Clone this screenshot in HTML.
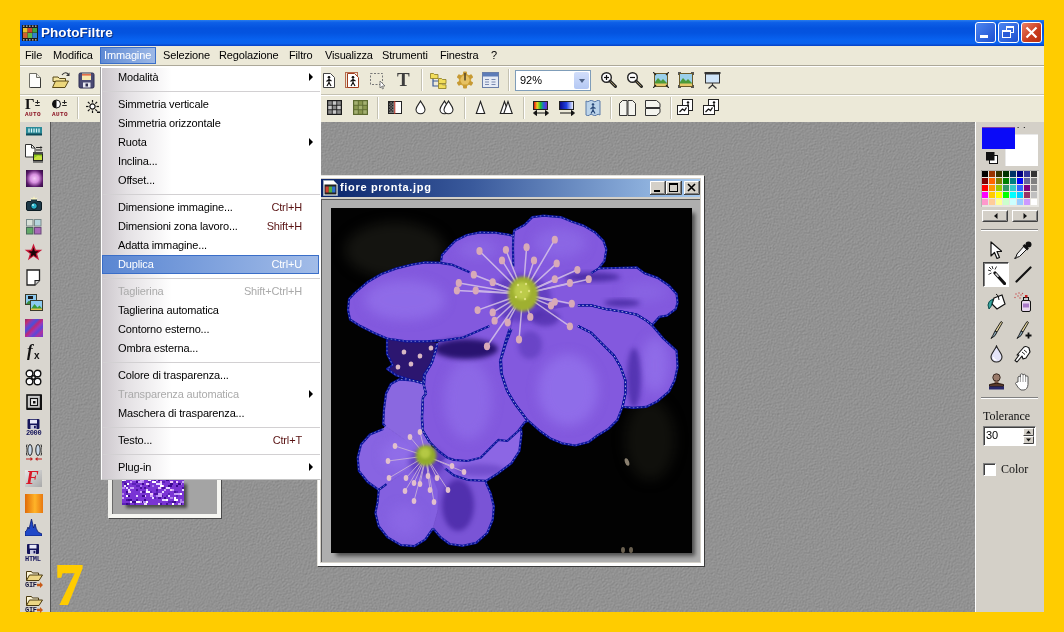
<!DOCTYPE html><html><head><meta charset="utf-8"><title>PhotoFiltre</title><style>
html,body{margin:0;padding:0}
body{width:1064px;height:632px;background:#ffcc00;position:relative;overflow:hidden;font-family:"Liberation Sans",sans-serif;font-size:11px;color:#000}
.a{position:absolute}
#title{left:20px;top:20px;width:1024px;height:26px;background:linear-gradient(#2a7cec 0%,#0d5fe6 10%,#0452de 32%,#0454e0 50%,#0862f0 76%,#0a62ee 90%,#0640c4 100%)}
#title .t{left:21px;top:5px;font-weight:bold;font-size:13.5px;color:#fff;text-shadow:1px 1px 0 #0a2a7a;letter-spacing:0.05px}
.tb{top:22px;width:21px;height:21px;border-radius:3px;box-sizing:border-box;border:1px solid #fff;background:linear-gradient(135deg,#4d86f0,#1c4fd0)}
#menubar{left:20px;top:46px;width:1024px;height:19px;background:#ece9d8}
#menubar span{position:absolute;top:3px;letter-spacing:-0.15px;white-space:nowrap}
#tool1{left:20px;top:65px;width:1024px;height:29px;background:#ece9d8;border-top:1px solid #aca899;box-sizing:border-box;box-shadow:inset 0 1px 0 #fff}
#tool2{left:20px;top:94px;width:1024px;height:28px;background:#ece9d8;border-top:1px solid #c5c2b2;box-sizing:border-box;box-shadow:inset 0 1px 0 #fff}
#side{left:20px;top:122px;width:30px;height:490px;background:#d9d6cf}
#work{left:51px;top:122px;width:924px;height:490px;background:#909090}
#rpanel{left:975px;top:122px;width:69px;height:490px;background:#d4d0c8;box-sizing:border-box;border-left:1px solid #fff}
.mi{position:absolute;left:16px;white-space:nowrap;letter-spacing:-0.15px}
.sc{position:absolute;right:18px;white-space:nowrap;color:#5a1414;letter-spacing:-0.15px}
.sep{position:absolute;left:1px;right:0;height:1px;background:#d2d0d2}
.arr{position:absolute;left:207px;width:0;height:0;border-left:4px solid #000;border-top:4px solid transparent;border-bottom:4px solid transparent}
</style></head><body><div id="root" style="position:absolute;left:0;top:0;width:1064px;height:632px;will-change:transform">
<div id="title" class="a"><span class="a t">PhotoFiltre</span></div>
<div class="a tb" style="left:975px"><div class="a" style="left:4px;top:12px;width:8px;height:3px;background:#fff"></div></div>
<div class="a tb" style="left:998px"><div class="a" style="left:7px;top:3px;width:8px;height:7px;box-sizing:border-box;border:1px solid #fff;border-top-width:2px"></div><div class="a" style="left:3px;top:7px;width:9px;height:8px;box-sizing:border-box;border:1px solid #fff;border-top-width:2px;background:#2a5cd8"></div></div>
<div class="a tb" style="left:1021px;background:linear-gradient(135deg,#ea8066,#c83a1c 60%,#b83010)"><svg class="a" style="left:0;top:0" width="19" height="19" viewBox="0 0 19 19"><path d="M4.500 4.500l10 10M14.500 4.500l-10 10" stroke="#fff" stroke-width="2.200"/></svg></div>
<svg class="a" style="left:22px;top:25px" width="16" height="16" viewBox="0 0 16 16"><rect width="16" height="16" fill="#1a1a1a"/><path d="M1 1.200h14M1 14.800h14" stroke="#c8c8c8" stroke-width="1.200" stroke-dasharray="1.500 1.500"/><rect x="1" y="3" width="4.600" height="4.600" fill="#e8c030"/><rect x="5.700" y="3" width="4.600" height="4.600" fill="#d04030"/><rect x="10.400" y="3" width="4.600" height="4.600" fill="#40a040"/><rect x="1" y="8" width="4.600" height="5" fill="#d06030"/><rect x="5.700" y="8" width="4.600" height="5" fill="#58b848"/><rect x="10.400" y="8" width="4.600" height="5" fill="#3080d0"/></svg>
<div id="menubar" class="a">
<span style="left:5px">File</span>
<span style="left:33px">Modifica</span>
<div class="a" style="left:80px;top:1px;width:56px;height:17px;box-sizing:border-box;border:1px solid #3a6ec8;background:linear-gradient(90deg,#5f8ad4,#9cb8e6)"></div><span style="left:84px;color:#fff">Immagine</span>
<span style="left:143px">Selezione</span>
<span style="left:199px">Regolazione</span>
<span style="left:269px">Filtro</span>
<span style="left:305px">Visualizza</span>
<span style="left:362px">Strumenti</span>
<span style="left:420px">Finestra</span>
<span style="left:471px">?</span>
</div>
<div id="tool1" class="a"></div><div id="tool2" class="a"></div>
<svg class="a" style="left:28px;top:72px" width="14" height="17" viewBox="0 0 14 17"><path d="M1.5 1.5h7l4 4v10h-11z" fill="#fdfdfb" stroke="#6e6e66" stroke-width="1"/><path d="M8.5 1.5v4h4" fill="#e8e8e0" stroke="#6e6e66" stroke-width="1"/><path d="M2.5 15.5h10v-9" fill="none" stroke="#3a3a36" stroke-width="1"/></svg><svg class="a" style="left:51px;top:71px" width="20" height="18" viewBox="0 0 20 18"><path d="M2 6h5l1.5 1.5h6v3h-12.5z" fill="#f5e7a0" stroke="#5a4a18" stroke-width="1"/><path d="M1.5 16.5l3-6.5h13l-3.5 6.5z" fill="#ecd77c" stroke="#5a4a18" stroke-width="1"/><path d="M11 4c2-3 5-3 6.5-0.5" fill="none" stroke="#333" stroke-width="1.1"/><path d="M18.5 1.5v3.5h-3.5z" fill="#333"/></svg><svg class="a" style="left:78px;top:72px" width="17" height="17" viewBox="0 0 17 17"><rect x="1" y="1" width="15" height="15" rx="1.5" fill="#4a4a74" stroke="#2c2c50"/><rect x="4" y="1.5" width="9" height="6.5" fill="#f6e9b0"/><rect x="4" y="2.2" width="9" height="1.3" fill="#e05030"/><rect x="5" y="10.5" width="7.5" height="5" fill="#e8e8f0"/><rect x="7.5" y="11.5" width="2.5" height="3" fill="#2c2c50"/></svg><svg class="a" style="left:321px;top:72px" width="15" height="17" viewBox="0 0 15 17"><path d="M2.5 1.5h7l4 4v10h-11z" fill="#fff" stroke="#444" stroke-width="1"/><circle cx="8" cy="5.2" r="1.3" fill="#111"/><path d="M8 6.5v4M8 7.5l-2.5 2M8 7.5l2.5 1.5M8 10.5l-2 3.5M8 10.5l2 3.5" stroke="#111" stroke-width="1.2" fill="none"/></svg><svg class="a" style="left:345px;top:72px" width="15" height="17" viewBox="0 0 15 17"><rect x="0.5" y="0.5" width="12" height="15" fill="none" stroke="#b86a4c"/><path d="M2.5 1.5h7l4 4v10h-11z" fill="#fff" stroke="#a03c1e" stroke-width="1"/><circle cx="8" cy="5.2" r="1.3" fill="#111"/><path d="M8 6.5v4M8 7.5l-2.5 2M8 7.5l2.5 1.5M8 10.5l-2 3.5M8 10.5l2 3.5" stroke="#111" stroke-width="1.2" fill="none"/></svg><svg class="a" style="left:369px;top:72px" width="18" height="18" viewBox="0 0 18 18"><rect x="1.5" y="1.5" width="12" height="11" fill="none" stroke="#777" stroke-dasharray="2 1.5"/><path d="M11 9l5 5h-2.5l1 2.5-1 .5-1-2.5-1.5 1.5z" fill="#fff" stroke="#666" stroke-width="0.8"/></svg><div class="a" style="left:397px;top:67px;font:bold 19px 'Liberation Serif',serif;color:#3c3c3c;line-height:26px">T</div><div class="a" style="left:421px;top:69px;width:1px;height:22px;background:#c5c2b2;box-shadow:1px 0 0 #fff"></div><svg class="a" style="left:430px;top:72px" width="17" height="17" viewBox="0 0 17 17"><path d="M3 5v9h6M3 9h6" stroke="#3a5a98" fill="none" stroke-width="1.2"/><path d="M0.5 1.5h3l1 1h3.5v4h-7.5z" fill="#f1dd5a" stroke="#8a7a20" stroke-width="0.8"/><path d="M8.5 6.5h3l1 1h3.5v4h-7.5z" fill="#f1dd5a" stroke="#8a7a20" stroke-width="0.8"/><path d="M8.5 11.8h3l1 1h3.5v3.7h-7.5z" fill="#f1dd5a" stroke="#8a7a20" stroke-width="0.8"/></svg><svg class="a" style="left:456px;top:71px" width="18" height="18" viewBox="0 0 18 18"><g transform="translate(9 9)"><circle r="6.2" fill="#d6a93c"/><rect x="-2" y="-8.5" width="4" height="4" rx="1" fill="#c79a34" transform="rotate(0)"/><rect x="-2" y="-8.5" width="4" height="4" rx="1" fill="#c79a34" transform="rotate(60)"/><rect x="-2" y="-8.5" width="4" height="4" rx="1" fill="#c79a34" transform="rotate(120)"/><rect x="-2" y="-8.5" width="4" height="4" rx="1" fill="#c79a34" transform="rotate(180)"/><rect x="-2" y="-8.5" width="4" height="4" rx="1" fill="#c79a34" transform="rotate(240)"/><rect x="-2" y="-8.5" width="4" height="4" rx="1" fill="#c79a34" transform="rotate(300)"/><circle r="4.5" fill="#e6c163"/><rect x="-0.8" y="-7" width="1.6" height="7.5" fill="#5a4a2a"/></g></svg><svg class="a" style="left:482px;top:72px" width="17" height="16" viewBox="0 0 17 16"><rect x="0.5" y="0.5" width="16" height="15" fill="#e6ebf5" stroke="#6a7ea8"/><rect x="1" y="1" width="15" height="3.5" fill="#5d7cb8"/><path d="M3 7.5h4M3 10h4M3 12.5h4M9.5 7.5h4M9.5 10h4M9.5 12.5h4" stroke="#7a8ab0" stroke-width="1.2"/></svg><div class="a" style="left:508px;top:69px;width:1px;height:22px;background:#c5c2b2;box-shadow:1px 0 0 #fff"></div><div class="a" style="left:515px;top:70px;width:76px;height:21px;box-sizing:border-box;border:1px solid #7f9db9;background:#fff"><span class="a" style="left:4px;top:3px;font-size:11px">92%</span><div class="a" style="right:1px;top:1px;width:15px;height:17px;background:linear-gradient(#d2defa,#b4c8f4);border-radius:2px"></div><div class="a" style="right:5px;top:8px;width:0;height:0;border-top:4px solid #4d6185;border-left:3.5px solid transparent;border-right:3.5px solid transparent"></div></div><svg class="a" style="left:600px;top:71px" width="18" height="18" viewBox="0 0 18 18"><circle cx="6.5" cy="6.5" r="4.8" fill="#fdfdfd" stroke="#222" stroke-width="1.4"/><path d="M10 10l5.5 5.5" stroke="#222" stroke-width="3" stroke-linecap="round"/><path d="M10.8 10.8l4.2 4.2" stroke="#9a8a5a" stroke-width="1" stroke-linecap="round"/><path d="M4 6.5h5" stroke="#111" stroke-width="1.2"/><path d="M6.5 4v5" stroke="#111" stroke-width="1.2"/></svg><svg class="a" style="left:626px;top:71px" width="18" height="18" viewBox="0 0 18 18"><circle cx="6.5" cy="6.5" r="4.8" fill="#fdfdfd" stroke="#222" stroke-width="1.4"/><path d="M10 10l5.5 5.5" stroke="#222" stroke-width="3" stroke-linecap="round"/><path d="M10.8 10.8l4.2 4.2" stroke="#9a8a5a" stroke-width="1" stroke-linecap="round"/><path d="M4 6.5h5" stroke="#111" stroke-width="1.2"/></svg><svg class="a" style="left:653px;top:72px" width="16" height="16" viewBox="0 0 16 16"><rect x="1.5" y="1.5" width="13" height="13" fill="#9ad0ea" stroke="#6a5a2a"/><path d="M2 10l3-4 3 3 2-2 4 4v3h-12z" fill="#4a9a3a"/><rect x="2" y="11.5" width="12" height="2.5" fill="#e6c86a"/><path d="M0 0l3 3M16 0l-3 3M0 16l3-3M16 16l-3-3" stroke="#222" stroke-width="1.2"/></svg><svg class="a" style="left:678px;top:72px" width="16" height="16" viewBox="0 0 16 16"><rect x="1.5" y="1.5" width="13" height="13" fill="#9ad0ea" stroke="#6a5a2a"/><path d="M2 10l3-4 3 3 2-2 4 4v3h-12z" fill="#4a9a3a"/><rect x="2" y="11.5" width="12" height="2.5" fill="#e6c86a"/><path d="M0.5 3v-2.5h2.5M13 0.5h2.5v2.5M15.500 13v2.500h-2.500M3 15.500h-2.500v-2.500" stroke="#555" fill="none" stroke-width="1.2"/></svg><svg class="a" style="left:704px;top:71px" width="17" height="18" viewBox="0 0 17 18"><rect x="0.5" y="1" width="16" height="2" fill="#333"/><rect x="1.5" y="3" width="14" height="9" fill="#cfe4f8" stroke="#333"/><path d="M8.500 12v2M8.500 14l-4 3.500M8.500 14l4 3.500" stroke="#333" stroke-width="1.2" fill="none"/></svg><div class="a" style="left:25px;top:96px;font:bold 15px 'Liberation Serif',serif;line-height:16px;color:#111">Γ</div><div class="a" style="left:35px;top:98px;font:bold 9px 'Liberation Sans',sans-serif;line-height:11px;color:#222">±</div><div class="a" style="left:25px;top:111px;font:bold 6px 'Liberation Mono',monospace;line-height:7px;color:#8a1020;letter-spacing:0.4px">AUTO</div><svg class="a" style="left:52px;top:99px" width="9" height="10" viewBox="0 0 9 10"><circle cx="4.5" cy="5" r="4" fill="#fff" stroke="#111"/><path d="M4.500 1a4 4 0 0 0 0 8z" fill="#111"/></svg><div class="a" style="left:62px;top:98px;font:bold 9px 'Liberation Sans',sans-serif;line-height:11px;color:#222">±</div><div class="a" style="left:52px;top:111px;font:bold 6px 'Liberation Mono',monospace;line-height:7px;color:#8a1020;letter-spacing:0.4px">AUTO</div><div class="a" style="left:77px;top:97px;width:1px;height:22px;background:#c5c2b2;box-shadow:1px 0 0 #fff"></div><svg class="a" style="left:86px;top:100px" width="14" height="14" viewBox="0 0 14 14"><g transform="translate(6.500 6.500)"><circle r="2.600" fill="#fff" stroke="#111" stroke-width="1.2"/><path d="M0 -4v-2.500" stroke="#111" stroke-width="1.2" transform="rotate(0)"/><path d="M0 -4v-2.500" stroke="#111" stroke-width="1.2" transform="rotate(45)"/><path d="M0 -4v-2.500" stroke="#111" stroke-width="1.2" transform="rotate(90)"/><path d="M0 -4v-2.500" stroke="#111" stroke-width="1.2" transform="rotate(135)"/><path d="M0 -4v-2.500" stroke="#111" stroke-width="1.2" transform="rotate(180)"/><path d="M0 -4v-2.500" stroke="#111" stroke-width="1.2" transform="rotate(225)"/><path d="M0 -4v-2.500" stroke="#111" stroke-width="1.2" transform="rotate(270)"/><path d="M0 -4v-2.500" stroke="#111" stroke-width="1.2" transform="rotate(315)"/></g><rect x="11" y="11.500" width="3" height="1.500" fill="#111"/></svg><svg class="a" style="left:327px;top:100px" width="15" height="15" viewBox="0 0 15 15"><rect width="15" height="15" fill="#1c1c1c"/><rect x="1.2" y="1.2" width="3.6" height="3.6" fill="#8a8a8a"/><rect x="1.2" y="5.7" width="3.6" height="3.6" fill="#c8c8c8"/><rect x="1.2" y="10.2" width="3.6" height="3.6" fill="#8a8a8a"/><rect x="5.7" y="1.2" width="3.6" height="3.6" fill="#c8c8c8"/><rect x="5.7" y="5.7" width="3.6" height="3.6" fill="#8a8a8a"/><rect x="5.7" y="10.2" width="3.6" height="3.6" fill="#c8c8c8"/><rect x="10.2" y="1.2" width="3.6" height="3.6" fill="#8a8a8a"/><rect x="10.2" y="5.7" width="3.6" height="3.6" fill="#c8c8c8"/><rect x="10.2" y="10.2" width="3.6" height="3.6" fill="#8a8a8a"/></svg><svg class="a" style="left:353px;top:100px" width="15" height="15" viewBox="0 0 15 15"><rect width="15" height="15" fill="#5c6a30"/><rect x="1.2" y="1.2" width="3.6" height="3.6" fill="#a4b070"/><rect x="1.2" y="5.7" width="3.6" height="3.6" fill="#8a9850"/><rect x="1.2" y="10.2" width="3.6" height="3.6" fill="#a4b070"/><rect x="5.7" y="1.2" width="3.6" height="3.6" fill="#8a9850"/><rect x="5.7" y="5.7" width="3.6" height="3.6" fill="#a4b070"/><rect x="5.7" y="10.2" width="3.6" height="3.6" fill="#8a9850"/><rect x="10.2" y="1.2" width="3.6" height="3.6" fill="#a4b070"/><rect x="10.2" y="5.7" width="3.6" height="3.6" fill="#8a9850"/><rect x="10.2" y="10.2" width="3.6" height="3.6" fill="#a4b070"/></svg><div class="a" style="left:377px;top:97px;width:1px;height:22px;background:#c5c2b2;box-shadow:1px 0 0 #fff"></div><svg class="a" style="left:388px;top:101px" width="14" height="13" viewBox="0 0 14 13"><rect x="0.5" y="0.5" width="13" height="12" fill="#fff" stroke="#222"/><rect x="1" y="1" width="5.500" height="11" fill="#777"/><path d="M1 1h1.400v1.400h-1.400zM3.800 1h1.400v1.400h-1.400zM2.400 2.400h1.400v1.400h-1.400zM1 3.800h1.400v1.400h-1.400zM3.800 3.800h1.400v1.400h-1.400zM2.400 5.200h1.400v1.400h-1.400zM1 6.600h1.400v1.400h-1.400zM3.800 6.600h1.400v1.400h-1.400zM2.400 8h1.400v1.400h-1.400zM1 9.400h1.400v1.400h-1.400zM3.800 9.400h1.400v1.400h-1.400z" fill="#222"/><path d="M6.800 0v13" stroke="#c03020" stroke-width="1"/></svg><svg class="a" style="left:415px;top:100px" width="12" height="15" viewBox="0 0 12 15"><path d="M5.5 1c-1.500 3-4.500 5.500-4.500 8.500a4.500 4.300 0 0 0 9 0c0-3-3-5.500-4.500-8.500z" fill="#fff" stroke="#222" stroke-width="1.1"/></svg><svg class="a" style="left:439px;top:100px" width="15" height="15" viewBox="0 0 15 15"><path d="M5.5 1c-1.500 3-4.500 5.500-4.500 8.500a4.500 4.300 0 0 0 9 0c0-3-3-5.500-4.500-8.500z" fill="#fff" stroke="#222" stroke-width="1.1"/><path d="M9.5 1c-1.500 3-4.500 5.500-4.500 8.500a4.500 4.300 0 0 0 9 0c0-3-3-5.500-4.500-8.500z" fill="#fff" stroke="#222" stroke-width="1.1"/></svg><div class="a" style="left:464px;top:97px;width:1px;height:22px;background:#c5c2b2;box-shadow:1px 0 0 #fff"></div><svg class="a" style="left:475px;top:100px" width="12" height="15" viewBox="0 0 12 15"><path d="M5.5 1.500l-4.200 12h8.400z" fill="#fff" stroke="#222" stroke-width="1.100"/></svg><svg class="a" style="left:499px;top:100px" width="15" height="15" viewBox="0 0 15 15"><path d="M5.5 1.500l-4.200 12h8.400z" fill="#fff" stroke="#222" stroke-width="1.100"/><path d="M9 1.500l-4.200 12h8.400z" fill="#fff" stroke="#222" stroke-width="1.100"/></svg><div class="a" style="left:523px;top:97px;width:1px;height:22px;background:#c5c2b2;box-shadow:1px 0 0 #fff"></div><div class="a" style="left:533px;top:101px;width:15px;height:9px;background:linear-gradient(90deg,#e01010,#f0d020,#20c030,#2060e0,#8020c0);border:1px solid #222;box-sizing:border-box"></div><svg class="a" style="left:533px;top:110px" width="16" height="6" viewBox="0 0 16 6"><path d="M2 3h12M0.500 3l3-2.500v5zM15.500 3l-3-2.500v5z" stroke="#111" fill="#111" stroke-width="1"/></svg><div class="a" style="left:559px;top:101px;width:15px;height:9px;background:linear-gradient(90deg,#0a0a8a,#2040e0,#e8eeff);border:1px solid #222;box-sizing:border-box"></div><svg class="a" style="left:559px;top:110px" width="16" height="6" viewBox="0 0 16 6"><path d="M1 3h12M15.500 3l-3-2.500v5z" stroke="#111" fill="#111" stroke-width="1"/></svg><svg class="a" style="left:585px;top:100px" width="16" height="16" viewBox="0 0 16 16"><path d="M1 1q2 1.500 3.500 0t3.500 0 3.500 0 3.500 0v14q-2-1.500-3.500 0t-3.500 0-3.500 0-3.500 0z" fill="#bcd4ea" stroke="#5a7aa8"/><circle cx="8" cy="4.500" r="1.300" fill="#2a4a7a"/><path d="M8 6v4M8 7l-2.500 2M8 7l2.500 1.500M8 10l-2 3.500M8 10l2 3.500" stroke="#2a4a7a" stroke-width="1.200" fill="none"/></svg><div class="a" style="left:610px;top:97px;width:1px;height:22px;background:#c5c2b2;box-shadow:1px 0 0 #fff"></div><svg class="a" style="left:619px;top:100px" width="17" height="16" viewBox="0 0 17 16"><path d="M0.500 15.500v-12l3-3h4.500v15zM9 15.500v-15h4.500l3 3v12z" fill="#f4f4ee" stroke="#333"/></svg><svg class="a" style="left:645px;top:100px" width="16" height="16" viewBox="0 0 16 16"><path d="M0.500 0.500h11l3.500 3v4h-14.500zM0.500 8.500h14.500v4l-3.500 3h-11z" fill="#f4f4ee" stroke="#333"/></svg><div class="a" style="left:670px;top:97px;width:1px;height:22px;background:#c5c2b2;box-shadow:1px 0 0 #fff"></div><svg class="a" style="left:677px;top:99px" width="17" height="17" viewBox="0 0 17 17"><rect x="5.500" y="0.500" width="10" height="11" fill="#fff" stroke="#222"/><rect x="0.500" y="6.500" width="11" height="9" fill="#fff" stroke="#222"/><path d="M2.500 13l3-3 2 1.500 2-3" stroke="#111" stroke-width="1.300" fill="none"/><circle cx="11" cy="3.500" r="1.200" fill="#111"/><path d="M11 5v3" stroke="#111" stroke-width="1.200"/></svg><svg class="a" style="left:703px;top:99px" width="17" height="17" viewBox="0 0 17 17"><rect x="5.500" y="0.500" width="10" height="11" fill="#fff" stroke="#222"/><rect x="0.500" y="6.500" width="11" height="9" fill="#fff" stroke="#222"/><path d="M2.500 13l3-3 2 1.500 2-3" stroke="#111" stroke-width="1.300" fill="none"/><circle cx="11" cy="3.500" r="1.200" fill="#111"/><path d="M11 5v3" stroke="#111" stroke-width="1.200"/></svg>
<div id="side" class="a"></div><div class="a" style="left:50px;top:122px;width:1px;height:490px;background:#555"></div><div id="work" class="a"><svg width="924" height="490" style="display:block"><filter id="tx" color-interpolation-filters="sRGB" x="0" y="0" width="100%" height="100%"><feTurbulence type="fractalNoise" baseFrequency="0.8" numOctaves="2" seed="3" result="n"/><feDiffuseLighting in="n" surfaceScale="0.4" diffuseConstant="1" lighting-color="#fff"><feDistantLight azimuth="225" elevation="50"/></feDiffuseLighting><feColorMatrix type="matrix" values="0.6 0 0 0 0.112 0 0.6 0 0 0.112 0 0 0.6 0 0.112 0 0 0 1 0"/></filter><rect width="924" height="490" filter="url(#tx)"/></svg></div><div id="rpanel" class="a"></div>
<svg class="a" style="left:26px;top:127px" width="16" height="9" viewBox="0 0 16 9"><rect x="0" y="0" width="16" height="8" fill="#2a8a98"/><rect x="0" y="6.500" width="16" height="2" fill="#0e4a58"/><path d="M3 1.500v4M5.500 1.500v4M8 1.500v4M10.500 1.500v4M13 1.500v4" stroke="#d8f4f8" stroke-width="1.300"/></svg><svg class="a" style="left:25px;top:144px" width="18" height="19" viewBox="0 0 18 19"><path d="M0.500 0.500h6l3.500 3.500v9h-9.500z" fill="#fff" stroke="#333"/><path d="M6.500 0.500v3.500h3.500" fill="none" stroke="#333"/><rect x="8" y="8" width="10" height="10.500" fill="#222"/><rect x="9" y="10.500" width="8" height="5.500" fill="#8cc820"/><path d="M9 14l4-2.500 4 1v3.500h-8z" fill="#c8e040"/><path d="M11 3.500h6M11 6h6" stroke="#222" stroke-width="1.200"/><path d="M17.500 3.500l-2-1.500v3z" fill="#222"/><path d="M8.500 9h9M8.500 17.500h9" stroke="#ddd" stroke-width="0.800" stroke-dasharray="1 1"/></svg><div class="a" style="left:26px;top:170px;width:17px;height:17px;background:radial-gradient(circle,#f4c8f8 0,#d890e0 35%,#5a1a6a 70%,#2a0a3a 100%)"></div><svg class="a" style="left:26px;top:196px" width="16" height="15" viewBox="0 0 16 15"><path d="M8 0l1 2.500 2.500-1-1.500 2.500h-4l-1.500-2.500 2.500 1z" fill="#fff8c0"/><rect x="0.500" y="5.500" width="15" height="9" rx="1.500" fill="#1e3a48" stroke="#0a1a22"/><rect x="5" y="3.500" width="6" height="3" fill="#1e3a48"/><circle cx="8" cy="10" r="3.300" fill="#28b0c8" stroke="#0a1a22"/><circle cx="7" cy="9" r="1" fill="#b8f0f8"/></svg><svg class="a" style="left:26px;top:219px" width="16" height="16" viewBox="0 0 16 16"><rect x="0.500" y="0.500" width="6.500" height="6.500" fill="#d8e0d8" stroke="#7a8a8a"/><rect x="8.500" y="0.500" width="6.500" height="6.500" fill="#b4d4dc" stroke="#7a8a8a"/><rect x="0.500" y="8.500" width="6.500" height="6.500" fill="#62a868" stroke="#4a6a5a"/><rect x="8.500" y="8.500" width="6.500" height="6.500" fill="#a868b8" stroke="#6a4a7a"/></svg><svg class="a" style="left:24px;top:243px" width="19" height="18" viewBox="0 0 19 18"><path d="M9.500 0.500l2.300 6.200h6.500l-5.200 4 2 6.500-5.600-4-5.600 4 2-6.500-5.200-4h6.500z" fill="#c81838"/><path d="M9.500 4.500l1.400 3.700h3.800l-3.100 2.400 1.200 3.800-3.300-2.400-3.300 2.400 1.200-3.800-3.100-2.400h3.800z" fill="#1a0508"/></svg><svg class="a" style="left:26px;top:269px" width="15" height="17" viewBox="0 0 15 17"><path d="M1 1h12.500v10.500l-4.500 4.500h-8z" fill="#fff" stroke="#222" stroke-width="1.300"/><path d="M13.500 11.500h-4.500v4.500" fill="#ccc" stroke="#222" stroke-width="1.100"/></svg><svg class="a" style="left:25px;top:294px" width="18" height="17" viewBox="0 0 18 17"><rect x="0.500" y="0.500" width="11" height="10" fill="#8ccaf0" stroke="#3a3a2a"/><rect x="3" y="2" width="5" height="3" fill="#1a1a1a"/><path d="M1 10l3-3.500 3 2.500v1.500z" fill="#3a8a3a"/><rect x="5.500" y="6.500" width="12" height="10" fill="#8ccaf0" stroke="#3a3a2a"/><path d="M6 15l3.500-5 3 3.500 2-2 2.500 3v1.500h-11z" fill="#3a9a3a"/><rect x="6" y="14.500" width="11" height="1.500" fill="#e0c050"/></svg><div class="a" style="left:25px;top:319px;width:18px;height:18px;background:linear-gradient(135deg,#8a2a6a 0%,#c03070 14%,#7a40c0 26%,#4a50d8 36%,#c02878 48%,#9a38b8 58%,#5a48d8 70%,#b030a0 82%,#6a40d0 100%)"></div><div class="a" style="left:27px;top:341px;font:italic bold 17px 'Liberation Serif',serif;line-height:20px;color:#111">f</div><div class="a" style="left:34px;top:350px;font:bold 10px 'Liberation Sans',sans-serif;line-height:11px;color:#111">x</div><svg class="a" style="left:25px;top:369px" width="17" height="17" viewBox="0 0 17 17"><g fill="#fff" stroke="#111" stroke-width="1.400"><circle cx="4.500" cy="4.500" r="3.300"/><circle cx="12.500" cy="4.500" r="3.300"/><circle cx="4.500" cy="12.500" r="3.300"/><circle cx="12.500" cy="12.500" r="3.300"/><circle cx="8.500" cy="8.500" r="1.800"/></g></svg><svg class="a" style="left:26px;top:394px" width="16" height="16" viewBox="0 0 16 16"><rect x="1" y="1" width="14" height="14" fill="#c8c8c8" stroke="#111" stroke-width="1.600"/><path d="M1 15h14v-14" fill="none" stroke="#111" stroke-width="2.400"/><rect x="4.500" y="4.500" width="7" height="7" fill="#e8e8e8" stroke="#111" stroke-width="1.100"/><rect x="7" y="7" width="2.500" height="2.500" fill="#111"/></svg><svg class="a" style="left:27px;top:419px" width="13" height="10" viewBox="0 0 12 10"><rect x="0" y="0" width="12" height="10" rx="1" fill="#14145a"/><rect x="2.500" y="0.800" width="7" height="3.700" fill="#e8e8f8"/><rect x="3" y="6" width="6" height="4" fill="#c8c8e0"/><rect x="6.500" y="6.800" width="1.800" height="2.500" fill="#14145a"/></svg><div class="a" style="left:26px;top:430px;font:bold 7px 'Liberation Mono',monospace;line-height:7px;color:#14145a;letter-spacing:-0.400px">2000</div><svg class="a" style="left:26px;top:444px" width="16" height="17" viewBox="0 0 16 17"><ellipse cx="4" cy="6" rx="2.200" ry="5.500" fill="#c8d8e8" stroke="#222"/><ellipse cx="12" cy="6" rx="2.200" ry="5.500" fill="#c8d8e8" stroke="#222"/><path d="M1 0.500c-1.500 4-1.500 7 0 11M15 0.500c1.500 4 1.500 7 0 11" stroke="#222" fill="none"/><path d="M0 15h6M16 15h-6" stroke="#c02020" stroke-width="1.200"/><path d="M7 15l-2.500-2v4zM9 15l2.500-2v4z" fill="#c02020"/></svg><div class="a" style="left:25px;top:470px;width:17px;height:17px;background:linear-gradient(135deg,#e8e8e8,#a8a8a8)"></div><div class="a" style="left:26px;top:467px;font:italic bold 19px 'Liberation Serif',serif;line-height:22px;color:#d81828">F</div><div class="a" style="left:25px;top:494px;width:18px;height:19px;background:linear-gradient(90deg,#e06a08,#ffb428 55%,#e87810)"></div><svg class="a" style="left:25px;top:519px" width="17" height="17" viewBox="0 0 17 17"><path d="M0 17v-4q2-1 3-5l1 2q1-4 2.500-10q1.500 6 2 9l1.500-4q1 5 3 8q2 1 4 2v2z" fill="#2048c8" stroke="#0a1a6a" stroke-width="0.800"/></svg><svg class="a" style="left:27px;top:544px" width="12" height="10" viewBox="0 0 12 10"><rect x="0" y="0" width="12" height="10" rx="1" fill="#14145a"/><rect x="2.500" y="0.800" width="7" height="3.700" fill="#e8e8f8"/><rect x="3" y="6" width="6" height="4" fill="#c8c8e0"/><rect x="6.500" y="6.800" width="1.800" height="2.500" fill="#14145a"/></svg><div class="a" style="left:25px;top:555px;font:bold 7px 'Liberation Mono',monospace;line-height:8px;color:#14145a;letter-spacing:-0.300px">HTML</div><svg class="a" style="left:26px;top:570px" width="17" height="11" viewBox="0 0 17 11"><path d="M0.500 10.500v-9h5l1 1.500h6v2" fill="#fdf6d8" stroke="#4a3a10"/><path d="M0.500 10.500l3-5.500h13l-3.500 5.500z" fill="#ecd684" stroke="#4a3a10"/></svg><div class="a" style="left:25px;top:581px;font:bold 7px 'Liberation Mono',monospace;line-height:8px;color:#14143a;letter-spacing:-0.300px">GIF</div><svg class="a" style="left:37px;top:582px" width="6" height="6" viewBox="0 0 6 6"><path d="M0 1.800h3v-1.800l3 3-3 3v-1.800h-3z" fill="#c85a18"/></svg><svg class="a" style="left:26px;top:595px" width="17" height="11" viewBox="0 0 17 11"><path d="M0.500 10.500v-9h5l1 1.500h6v2" fill="#fdf6d8" stroke="#4a3a10"/><path d="M0.500 10.500l3-5.500h13l-3.500 5.500z" fill="#ecd684" stroke="#4a3a10"/></svg><div class="a" style="left:25px;top:606px;font:bold 7px 'Liberation Mono',monospace;line-height:8px;color:#14143a;letter-spacing:-0.300px">GIF</div><svg class="a" style="left:37px;top:607px" width="6" height="6" viewBox="0 0 6 6"><path d="M0 1.800h3v-1.800l3 3-3 3v-1.800h-3z" fill="#c85a18"/></svg>
<div class="a" style="left:1005px;top:134px;width:33px;height:32px;background:#fff;box-shadow:inset 1px 1px 0 #e8e8e8"></div><div class="a" style="left:982px;top:127px;width:33px;height:21px;background:#0a0af8;border-top:1px solid #7a3ab0"></div><svg class="a" style="left:986px;top:152px" width="12" height="12" viewBox="0 0 12 12"><rect x="3.500" y="3.500" width="8" height="8" fill="#fff" stroke="#111"/><rect x="0" y="0" width="8.500" height="8.500" fill="#111"/></svg><div class="a" style="left:1017px;top:123px;font:bold 8px 'Liberation Sans',sans-serif;line-height:6px;color:#222;letter-spacing:4px">..</div><svg class="a" style="left:981px;top:170px" width="58" height="37" viewBox="0 0 58 37"><rect width="58" height="37" fill="#e8e6e0"/><path d="M0 37v-37h58" stroke="#808080" fill="none"/><rect x="1" y="1" width="6" height="6" fill="#000000"/><rect x="8" y="1" width="6" height="6" fill="#993300"/><rect x="15" y="1" width="6" height="6" fill="#333300"/><rect x="22" y="1" width="6" height="6" fill="#003300"/><rect x="29" y="1" width="6" height="6" fill="#003366"/><rect x="36" y="1" width="6" height="6" fill="#000080"/><rect x="43" y="1" width="6" height="6" fill="#333399"/><rect x="50" y="1" width="6" height="6" fill="#333333"/><rect x="1" y="8" width="6" height="6" fill="#800000"/><rect x="8" y="8" width="6" height="6" fill="#ff6600"/><rect x="15" y="8" width="6" height="6" fill="#808000"/><rect x="22" y="8" width="6" height="6" fill="#008000"/><rect x="29" y="8" width="6" height="6" fill="#008080"/><rect x="36" y="8" width="6" height="6" fill="#0000ff"/><rect x="43" y="8" width="6" height="6" fill="#666699"/><rect x="50" y="8" width="6" height="6" fill="#808080"/><rect x="1" y="15" width="6" height="6" fill="#ff0000"/><rect x="8" y="15" width="6" height="6" fill="#ff9900"/><rect x="15" y="15" width="6" height="6" fill="#99cc00"/><rect x="22" y="15" width="6" height="6" fill="#339966"/><rect x="29" y="15" width="6" height="6" fill="#33cccc"/><rect x="36" y="15" width="6" height="6" fill="#3366ff"/><rect x="43" y="15" width="6" height="6" fill="#800080"/><rect x="50" y="15" width="6" height="6" fill="#969696"/><rect x="1" y="22" width="6" height="6" fill="#ff00ff"/><rect x="8" y="22" width="6" height="6" fill="#ffcc00"/><rect x="15" y="22" width="6" height="6" fill="#ffff00"/><rect x="22" y="22" width="6" height="6" fill="#00ff00"/><rect x="29" y="22" width="6" height="6" fill="#00ffff"/><rect x="36" y="22" width="6" height="6" fill="#00ccff"/><rect x="43" y="22" width="6" height="6" fill="#993366"/><rect x="50" y="22" width="6" height="6" fill="#c0c0c0"/><rect x="1" y="29" width="6" height="6" fill="#ff99cc"/><rect x="8" y="29" width="6" height="6" fill="#ffcc99"/><rect x="15" y="29" width="6" height="6" fill="#ffff99"/><rect x="22" y="29" width="6" height="6" fill="#ccffcc"/><rect x="29" y="29" width="6" height="6" fill="#ccffff"/><rect x="36" y="29" width="6" height="6" fill="#99ccff"/><rect x="43" y="29" width="6" height="6" fill="#cc99ff"/><rect x="50" y="29" width="6" height="6" fill="#ffffff"/></svg><svg class="a" style="left:982px;top:210px" width="26" height="12" viewBox="0 0 26 12"><rect x="0.500" y="0.500" width="25" height="11" fill="#d4d0c8" stroke="#fff"/><path d="M0.500 11.500h25v-11" stroke="#404040" fill="none"/><path d="M1.500 10.500h23v-9" stroke="#808080" fill="none"/><path d="M15.500 3l-3.500 3 3.500 3z" fill="#111"/></svg><svg class="a" style="left:1012px;top:210px" width="26" height="12" viewBox="0 0 26 12"><rect x="0.500" y="0.500" width="25" height="11" fill="#d4d0c8" stroke="#fff"/><path d="M0.500 11.500h25v-11" stroke="#404040" fill="none"/><path d="M1.500 10.500h23v-9" stroke="#808080" fill="none"/><path d="M11.500 3l3.500 3-3.500 3z" fill="#111"/></svg><div class="a" style="left:981px;top:229px;width:57px;height:1px;background:#808080;box-shadow:0 1px 0 #fff"></div><div class="a" style="left:981px;top:397px;width:57px;height:1px;background:#808080;box-shadow:0 1px 0 #fff"></div><svg class="a" style="left:990px;top:241px" width="12" height="19" viewBox="0 0 12 19"><path d="M1 1v14l3.500-3.500 2.500 6 2.500-1-2.500-6h5z" fill="#fff" stroke="#111" stroke-width="1.200" stroke-linejoin="round"/></svg><svg class="a" style="left:1014px;top:241px" width="18" height="19" viewBox="0 0 18 19"><path d="M11 4l3 3-8.500 8.500-3 1-1 1.500-1-1 1.500-1 1-3z" fill="#f4f4f4" stroke="#111"/><path d="M9.500 4l4.500 4.500" stroke="#111" stroke-width="2.600"/><circle cx="14.500" cy="3.500" r="3" fill="#111"/></svg><div class="a" style="left:983px;top:262px;width:26px;height:25px;box-sizing:border-box;background:#fff;border:1px solid #404040;border-right-color:#fff;border-bottom-color:#fff;box-shadow:inset 1px 1px 0 #808080"></div><svg class="a" style="left:987px;top:265px" width="19" height="20" viewBox="0 0 19 20"><path d="M8 8l9.500 10.500" stroke="#111" stroke-width="3.200" stroke-linecap="round"/><path d="M8.500 8.500l3 3.300" stroke="#ddd" stroke-width="1.500"/><path d="M5 1l1 3M1 5l3 1M9.500 1.500l-1.500 3M1.500 9.500l3-1.500M2 2l2.500 2.500" stroke="#333" stroke-width="1"/></svg><svg class="a" style="left:1015px;top:266px" width="17" height="17" viewBox="0 0 17 17"><path d="M1.500 15.500l14-14" stroke="#111" stroke-width="2.200" stroke-linecap="round"/></svg><svg class="a" style="left:986px;top:293px" width="21" height="19" viewBox="0 0 21 19"><path d="M8 5l8 -3 3 9-8 5-5-5z" fill="#fff" stroke="#111" stroke-width="1.200"/><path d="M7 6q-5 2-5 6l1 4q3-3 3-6z" fill="#38a8a0" stroke="#0a4a4a"/><path d="M10 1q3 1 3 6" stroke="#111" fill="none"/></svg><svg class="a" style="left:1013px;top:291px" width="20" height="22" viewBox="0 0 20 22"><rect x="8.500" y="9.500" width="9" height="11" rx="1.500" fill="#e8d8f0" stroke="#111"/><rect x="10" y="12.500" width="6" height="4" fill="#a878c8"/><rect x="10.500" y="6.500" width="5" height="3" fill="#c8c8c8" stroke="#111"/><rect x="12" y="4" width="2.500" height="2.500" fill="#c82020"/><g fill="#c84848"><circle cx="3" cy="3" r="0.700"/><circle cx="6" cy="2" r="0.700"/><circle cx="5" cy="5" r="0.700"/><circle cx="8" cy="4" r="0.700"/><circle cx="2" cy="6.500" r="0.700"/><circle cx="7" cy="7" r="0.700"/><circle cx="9.500" cy="2.500" r="0.700"/></g></svg><svg class="a" style="left:989px;top:321px" width="18" height="19" viewBox="0 0 18 19"><path d="M12 0.500l1.500 1-5.500 9.500-2-1z" fill="#e8d8a0" stroke="#111" stroke-width="0.900"/><path d="M6 10l2 1q-1 4-6 6.500q2-3 4-7.500z" fill="#8aa8b8" stroke="#111" stroke-width="0.900"/></svg><svg class="a" style="left:1015px;top:321px" width="18" height="19" viewBox="0 0 18 19"><path d="M12 0.500l1.500 1-5.500 9.500-2-1z" fill="#e8d8a0" stroke="#111" stroke-width="0.900"/><path d="M6 10l2 1q-1 4-6 6.500q2-3 4-7.500z" fill="#8aa8b8" stroke="#111" stroke-width="0.900"/><path d="M10.500 14.500h6M13.500 11.500v6" stroke="#111" stroke-width="1.800"/></svg><svg class="a" style="left:990px;top:345px" width="13" height="18" viewBox="0 0 13 18"><path d="M6.500 1c-1.500 4-5.500 7.500-5.500 11a5.500 5 0 0 0 11 0c0-3.500-4-7-5.500-11z" fill="#e4e4f8" stroke="#222" stroke-width="1.100"/><path d="M3.500 12a3 3 0 0 0 3 3" stroke="#fff" fill="none" stroke-width="1.200"/></svg><svg class="a" style="left:1014px;top:345px" width="18" height="19" viewBox="0 0 18 19"><path d="M3 10l7-8q2-1.500 5 1l1 4-4 6-3 1-1-3-5 6-2-1.500 4-5.500z" fill="#fff" stroke="#111" stroke-width="1.100" stroke-linejoin="round"/><path d="M8 7l3 2.500M10 5l3 2.500" stroke="#111" stroke-width="0.900"/></svg><svg class="a" style="left:988px;top:373px" width="17" height="17" viewBox="0 0 17 17"><circle cx="8.500" cy="4.500" r="3.700" fill="#9a7a6a" stroke="#3a2a22"/><path d="M6.500 8h4v3h-4z" fill="#7a5a4a"/><path d="M1.500 11.500q7-2.500 14 0v2h-14z" fill="#5a3a2a" stroke="#2a1a12"/><rect x="1" y="13.500" width="15" height="3" fill="#28286a"/></svg><svg class="a" style="left:1014px;top:372px" width="19" height="19" viewBox="0 0 19 19"><path d="M4 10v-5q1.200-1.500 2.400 0v-2.500q1.300-1.500 2.600 0v0.500q1.300-1.500 2.600 0v1.500q1.300-1.200 2.400 0v8q-0.500 5-4 5.500h-3q-2.500-1-5.500-6.500q0.800-2 2.500-1.500z" fill="#fff" stroke="#555" stroke-width="1"/><path d="M6.400 5v5M9 3v7M11.600 4.500v5.500" stroke="#888" stroke-width="0.800"/></svg><div class="a" style="left:983px;top:409px;font:12px 'Liberation Serif',serif;line-height:14px;color:#111;white-space:nowrap">Tolerance</div><div class="a" style="left:983px;top:426px;width:53px;height:20px;box-sizing:border-box;background:#fff;border:1px solid #808080;border-right-color:#fff;border-bottom-color:#fff;box-shadow:inset 1px 1px 0 #404040"><span class="a" style="left:2px;top:2px;font-size:11px">30</span></div><svg class="a" style="left:1023px;top:428px" width="11" height="8" viewBox="0 0 11 8"><rect x="0.500" y="0.500" width="10" height="7" fill="#d4d0c8" stroke="#fff"/><path d="M0.500 7.500h10v-7" stroke="#404040" fill="none"/><path d="M3 5.500l2.500-3 2.500 3z" fill="#111"/></svg><svg class="a" style="left:1023px;top:436px" width="11" height="8" viewBox="0 0 11 8"><rect x="0.500" y="0.500" width="10" height="7" fill="#d4d0c8" stroke="#fff"/><path d="M0.500 7.500h10v-7" stroke="#404040" fill="none"/><path d="M3 2.500l2.500 3 2.500-3z" fill="#111"/></svg><div class="a" style="left:983px;top:463px;width:13px;height:13px;box-sizing:border-box;background:#fff;border:1px solid #808080;border-right-color:#fff;border-bottom-color:#fff;box-shadow:inset 1px 1px 0 #404040"></div><div class="a" style="left:1001px;top:462px;font:12px 'Liberation Serif',serif;line-height:14px;color:#111">Color</div>
<div class="a" style="left:108px;top:470px;width:113px;height:48px;background:#a4a4a4;box-sizing:border-box;border:4px solid #eeeeea;border-right-color:#f6f6f2;border-bottom-color:#f6f6f2;box-shadow:1px 1px 0 #4a4a4a,inset 1px 1px 0 #6a6a6a"></div>
<div class="a" style="left:126px;top:484px;width:61px;height:24px;background:#4c4c4c;filter:blur(1.500px)"></div>
<svg class="a" style="left:122px;top:479px" width="62" height="26" viewBox="0 0 62 26"><rect width="62" height="26" fill="#7a34d4"/><rect x="20" y="4" width="2" height="2" fill="#3a0890"/><rect x="4" y="16" width="3" height="2" fill="#ffffff"/><rect x="36" y="0" width="2" height="2" fill="#4a10a0"/><rect x="4" y="12" width="2" height="2" fill="#3a0890"/><rect x="14" y="2" width="2" height="2" fill="#3a0890"/><rect x="52" y="18" width="2" height="2" fill="#ffffff"/><rect x="40" y="20" width="4" height="2" fill="#e8d8ff"/><rect x="2" y="6" width="2" height="2" fill="#e8d8ff"/><rect x="18" y="12" width="2" height="2" fill="#c8a0f8"/><rect x="36" y="8" width="2" height="2" fill="#c8a0f8"/><rect x="36" y="18" width="3" height="2" fill="#4a10a0"/><rect x="6" y="16" width="2" height="2" fill="#ffffff"/><rect x="38" y="6" width="4" height="2" fill="#f0c8f8"/><rect x="48" y="10" width="4" height="2" fill="#f0c8f8"/><rect x="22" y="8" width="2" height="2" fill="#4a10a0"/><rect x="44" y="24" width="2" height="2" fill="#4a10a0"/><rect x="36" y="8" width="3" height="2" fill="#f0c8f8"/><rect x="46" y="14" width="2" height="2" fill="#5a20b8"/><rect x="6" y="16" width="2" height="2" fill="#3a0890"/><rect x="48" y="10" width="4" height="2" fill="#c8a0f8"/><rect x="26" y="0" width="3" height="2" fill="#ffffff"/><rect x="20" y="22" width="4" height="2" fill="#b080f0"/><rect x="36" y="24" width="2" height="2" fill="#f0c8f8"/><rect x="52" y="2" width="4" height="2" fill="#5a20b8"/><rect x="44" y="20" width="2" height="2" fill="#ffffff"/><rect x="46" y="22" width="4" height="2" fill="#5a20b8"/><rect x="18" y="22" width="3" height="2" fill="#3a0890"/><rect x="0" y="14" width="2" height="2" fill="#b080f0"/><rect x="38" y="2" width="2" height="2" fill="#f0c8f8"/><rect x="12" y="24" width="2" height="2" fill="#5a20b8"/><rect x="46" y="6" width="4" height="2" fill="#3a0890"/><rect x="58" y="14" width="2" height="2" fill="#ffffff"/><rect x="28" y="12" width="2" height="2" fill="#5a20b8"/><rect x="52" y="12" width="4" height="2" fill="#5a20b8"/><rect x="22" y="20" width="2" height="2" fill="#3a0890"/><rect x="8" y="2" width="2" height="2" fill="#c8a0f8"/><rect x="14" y="20" width="2" height="2" fill="#4a10a0"/><rect x="30" y="18" width="3" height="2" fill="#c8a0f8"/><rect x="18" y="0" width="4" height="2" fill="#c8a0f8"/><rect x="34" y="10" width="2" height="2" fill="#b080f0"/><rect x="44" y="16" width="4" height="2" fill="#e8d8ff"/><rect x="56" y="24" width="4" height="2" fill="#3a0890"/><rect x="24" y="12" width="4" height="2" fill="#ffffff"/><rect x="40" y="12" width="2" height="2" fill="#e8d8ff"/><rect x="4" y="6" width="2" height="2" fill="#f0c8f8"/><rect x="6" y="10" width="2" height="2" fill="#e8d8ff"/><rect x="0" y="18" width="2" height="2" fill="#c8a0f8"/><rect x="60" y="10" width="2" height="2" fill="#e8d8ff"/><rect x="54" y="6" width="2" height="2" fill="#3a0890"/><rect x="40" y="8" width="3" height="2" fill="#b080f0"/><rect x="30" y="2" width="4" height="2" fill="#ffffff"/><rect x="28" y="14" width="3" height="2" fill="#f0c8f8"/><rect x="4" y="4" width="3" height="2" fill="#ffffff"/><rect x="46" y="8" width="2" height="2" fill="#f0c8f8"/><rect x="32" y="0" width="3" height="2" fill="#4a10a0"/><rect x="8" y="22" width="3" height="2" fill="#e8d8ff"/><rect x="40" y="2" width="3" height="2" fill="#5a20b8"/><rect x="58" y="4" width="2" height="2" fill="#b080f0"/><rect x="34" y="16" width="2" height="2" fill="#b080f0"/><rect x="38" y="24" width="2" height="2" fill="#4a10a0"/><rect x="52" y="12" width="2" height="2" fill="#4a10a0"/><rect x="32" y="14" width="2" height="2" fill="#b080f0"/><rect x="0" y="24" width="4" height="2" fill="#5a20b8"/><rect x="16" y="6" width="4" height="2" fill="#b080f0"/><rect x="50" y="22" width="3" height="2" fill="#b080f0"/><rect x="4" y="6" width="2" height="2" fill="#ffffff"/><rect x="30" y="6" width="2" height="2" fill="#b080f0"/><rect x="30" y="18" width="4" height="2" fill="#e8d8ff"/><rect x="58" y="20" width="2" height="2" fill="#b080f0"/><rect x="52" y="20" width="4" height="2" fill="#ffffff"/><rect x="50" y="22" width="4" height="2" fill="#4a10a0"/><rect x="56" y="4" width="3" height="2" fill="#3a0890"/><rect x="4" y="24" width="4" height="2" fill="#3a0890"/><rect x="24" y="22" width="2" height="2" fill="#ffffff"/><rect x="10" y="4" width="2" height="2" fill="#e8d8ff"/><rect x="36" y="14" width="4" height="2" fill="#c8a0f8"/><rect x="42" y="10" width="2" height="2" fill="#c8a0f8"/><rect x="0" y="0" width="2" height="2" fill="#ffffff"/><rect x="26" y="6" width="2" height="2" fill="#4a10a0"/><rect x="16" y="6" width="2" height="2" fill="#5a20b8"/><rect x="48" y="18" width="3" height="2" fill="#b080f0"/><rect x="34" y="12" width="2" height="2" fill="#c8a0f8"/><rect x="58" y="22" width="4" height="2" fill="#b080f0"/><rect x="42" y="18" width="2" height="2" fill="#3a0890"/><rect x="34" y="4" width="4" height="2" fill="#e8d8ff"/><rect x="48" y="4" width="2" height="2" fill="#e8d8ff"/><rect x="10" y="4" width="2" height="2" fill="#f0c8f8"/><rect x="34" y="0" width="4" height="2" fill="#b080f0"/><rect x="50" y="24" width="2" height="2" fill="#ffffff"/><rect x="14" y="6" width="2" height="2" fill="#5a20b8"/><rect x="48" y="2" width="2" height="2" fill="#f0c8f8"/><rect x="48" y="2" width="3" height="2" fill="#f0c8f8"/><rect x="38" y="16" width="3" height="2" fill="#4a10a0"/><rect x="28" y="16" width="2" height="2" fill="#f0c8f8"/><rect x="44" y="16" width="2" height="2" fill="#5a20b8"/><rect x="52" y="14" width="4" height="2" fill="#c8a0f8"/><rect x="6" y="12" width="3" height="2" fill="#f0c8f8"/><rect x="4" y="20" width="4" height="2" fill="#4a10a0"/><rect x="4" y="6" width="2" height="2" fill="#5a20b8"/><rect x="56" y="24" width="3" height="2" fill="#c8a0f8"/><rect x="8" y="8" width="4" height="2" fill="#c8a0f8"/><rect x="14" y="22" width="4" height="2" fill="#ffffff"/><rect x="56" y="14" width="2" height="2" fill="#c8a0f8"/><rect x="10" y="22" width="4" height="2" fill="#3a0890"/><rect x="20" y="12" width="3" height="2" fill="#4a10a0"/><rect x="20" y="2" width="2" height="2" fill="#b080f0"/><rect x="20" y="16" width="4" height="2" fill="#f0c8f8"/><rect x="44" y="0" width="3" height="2" fill="#3a0890"/><rect x="32" y="18" width="2" height="2" fill="#5a20b8"/><rect x="6" y="24" width="2" height="2" fill="#4a10a0"/><rect x="4" y="8" width="2" height="2" fill="#5a20b8"/><rect x="56" y="24" width="3" height="2" fill="#c8a0f8"/><rect x="48" y="4" width="3" height="2" fill="#3a0890"/><rect x="24" y="4" width="3" height="2" fill="#f0c8f8"/><rect x="4" y="8" width="2" height="2" fill="#e8d8ff"/><rect x="26" y="2" width="2" height="2" fill="#5a20b8"/><rect x="40" y="2" width="2" height="2" fill="#5a20b8"/><rect x="38" y="6" width="3" height="2" fill="#ffffff"/><rect x="54" y="2" width="2" height="2" fill="#f0c8f8"/><rect x="20" y="16" width="3" height="2" fill="#3a0890"/><rect x="38" y="4" width="2" height="2" fill="#e8d8ff"/><rect x="60" y="2" width="3" height="2" fill="#c8a0f8"/><rect x="2" y="4" width="3" height="2" fill="#4a10a0"/><rect x="40" y="8" width="3" height="2" fill="#4a10a0"/><rect x="28" y="16" width="3" height="2" fill="#c8a0f8"/><rect x="22" y="24" width="3" height="2" fill="#e8d8ff"/><rect x="2" y="0" width="2" height="2" fill="#e8d8ff"/><rect x="32" y="14" width="4" height="2" fill="#4a10a0"/><rect x="6" y="20" width="4" height="2" fill="#3a0890"/><rect x="34" y="12" width="2" height="2" fill="#5a20b8"/><rect x="14" y="10" width="2" height="2" fill="#4a10a0"/><rect x="24" y="10" width="2" height="2" fill="#e8d8ff"/><rect x="0" y="2" width="4" height="2" fill="#5a20b8"/><rect x="10" y="0" width="4" height="2" fill="#ffffff"/><rect x="54" y="16" width="2" height="2" fill="#5a20b8"/><rect x="44" y="8" width="4" height="2" fill="#e8d8ff"/><rect x="10" y="4" width="4" height="2" fill="#5a20b8"/><rect x="0" y="8" width="3" height="2" fill="#b080f0"/><rect x="34" y="10" width="2" height="2" fill="#4a10a0"/><rect x="60" y="8" width="3" height="2" fill="#4a10a0"/><rect x="10" y="0" width="4" height="2" fill="#b080f0"/><rect x="4" y="14" width="2" height="2" fill="#5a20b8"/><rect x="14" y="16" width="2" height="2" fill="#e8d8ff"/><rect x="16" y="2" width="4" height="2" fill="#c8a0f8"/><rect x="36" y="0" width="2" height="2" fill="#3a0890"/><rect x="18" y="8" width="2" height="2" fill="#4a10a0"/><rect x="36" y="16" width="4" height="2" fill="#c8a0f8"/><rect x="48" y="10" width="2" height="2" fill="#f0c8f8"/><rect x="18" y="22" width="2" height="2" fill="#c8a0f8"/><rect x="52" y="22" width="2" height="2" fill="#3a0890"/></svg>
<div class="a" style="left:317px;top:175px;width:388px;height:392px;background:#d4d0c8;box-sizing:border-box;border:1px solid #e4e2dc;border-right-color:#3c3c3c;border-bottom-color:#3c3c3c;box-shadow:inset 2px 2px 0 #fff,inset -3px -3px 0 #fff"></div>
<div class="a" style="left:321px;top:179px;width:379px;height:18px;background:linear-gradient(90deg,#0a246a,#3a5a9c 40%,#a6caf0)"><span class="a" style="left:19px;top:2px;color:#fff;font-weight:bold;font-size:11px;white-space:nowrap;letter-spacing:0.68px">fiore pronta.jpg</span></div>
<svg class="a" style="left:323px;top:180px" width="15" height="16" viewBox="0 0 15 16"><path d="M0.500 0.500h10l4 4v11h-14z" fill="#fff" stroke="#9ab"/><rect x="1.500" y="4.500" width="12" height="10" fill="#222"/><rect x="2.500" y="6.500" width="3.300" height="6" fill="#d04030"/><rect x="5.800" y="6.500" width="3.300" height="6" fill="#50b040"/><rect x="9.100" y="6.500" width="3.300" height="6" fill="#3070d0"/></svg>
<svg class="a" style="left:650px;top:181px" width="16" height="14" viewBox="0 0 16 14"><rect width="16" height="14" fill="#d4d0c8"/><path d="M0.500 13.500v-13h15" stroke="#fff" fill="none"/><path d="M0 13.500h15.500v-13.500" stroke="#404040" fill="none"/><path d="M1 12.500h13.500v-12" stroke="#808080" fill="none"/><rect x="4" y="9" width="6" height="2" fill="#000"/></svg>
<svg class="a" style="left:666px;top:181px" width="16" height="14" viewBox="0 0 16 14"><rect width="16" height="14" fill="#d4d0c8"/><path d="M0.500 13.500v-13h15" stroke="#fff" fill="none"/><path d="M0 13.500h15.500v-13.500" stroke="#404040" fill="none"/><path d="M1 12.500h13.500v-12" stroke="#808080" fill="none"/><rect x="3.500" y="2.500" width="8" height="8" fill="none" stroke="#000"/><rect x="3" y="2" width="9" height="2" fill="#000"/></svg>
<svg class="a" style="left:684px;top:181px" width="16" height="14" viewBox="0 0 16 14"><rect width="16" height="14" fill="#d4d0c8"/><path d="M0.500 13.500v-13h15" stroke="#fff" fill="none"/><path d="M0 13.500h15.500v-13.500" stroke="#404040" fill="none"/><path d="M1 12.500h13.500v-12" stroke="#808080" fill="none"/><path d="M4 3l7 7M11 3l-7 7" stroke="#000" stroke-width="1.600"/></svg>
<div class="a" style="left:321px;top:199px;width:379px;height:363px;background:#aeaeae;box-sizing:border-box;border-top:1px solid #5a5a5a;border-left:1px solid #5a5a5a"></div>
<div class="a" style="left:336px;top:213px;width:359px;height:343px;background:#4a4a4a;filter:blur(2px)"></div>
<svg class="a" style="left:331px;top:208px" width="361" height="345" viewBox="331 208 361 345"><defs><filter id="bl" color-interpolation-filters="sRGB" x="-30%" y="-30%" width="160%" height="160%"><feGaussianBlur stdDeviation="6"/></filter><filter id="bs" color-interpolation-filters="sRGB" x="-30%" y="-30%" width="160%" height="160%"><feGaussianBlur stdDeviation="2.5"/></filter><filter id="b2" color-interpolation-filters="sRGB"><feGaussianBlur stdDeviation="1.4"/></filter><filter id="b1" color-interpolation-filters="sRGB"><feGaussianBlur stdDeviation="0.6"/></filter><clipPath id="fl"><path d="M437.3 343.2 L435.4 351.8 L430.7 365.0 L424.0 374.6 L423.0 383.1 L411.7 380.3 L396.5 375.5 L387.0 368.9 L392.7 365.0 L387.0 353.7 L387.0 339.4 L406.0 341.3 L425.0 341.3Z"/><path d="M405.0 440.0 L425.0 444.0 L440.0 452.0 L450.0 460.0 L450.0 472.0 L440.0 492.0 L425.0 480.0 L400.0 475.0 L415.0 465.0Z"/><path d="M385.4 426.6 L383.2 424.0 L384.0 408.8 L386.0 393.6 L390.8 384.0 L399.3 379.3 L411.7 380.3 L423.0 383.1 L424.0 386.0 L426.0 393.6 L423.0 397.4 L422.0 416.4 L423.0 431.0 L429.7 442.1 L432.0 450.0 L425.0 455.0 L415.0 450.0 L405.0 440.0 L391.0 430.0Z"/><path d="M383.2 428.9 L369.9 434.4 L361.0 444.4 L357.7 457.7 L358.8 470.9 L367.7 482.0 L378.7 489.8 L386.5 484.2 L400.0 475.0 L415.0 465.0 L420.0 455.0 L405.0 440.0 L391.0 430.0 L385.4 426.6Z"/><path d="M378.7 489.8 L377.6 502.0 L375.4 513.0 L378.7 526.3 L387.6 537.4 L400.9 545.1 L414.2 546.2 L425.2 539.6 L433.0 528.5 L438.0 510.0 L440.0 490.0 L435.0 470.0 L425.0 460.0 L415.0 465.0 L400.0 475.0 L386.5 484.2Z"/><path d="M433.0 528.5 L440.7 537.4 L449.6 544.0 L462.9 545.8 L476.2 542.9 L487.3 533.0 L492.8 519.7 L493.9 506.4 L490.6 493.1 L486.1 483.1 L486.1 480.9 L467.3 479.8 L454.0 475.4 L445.2 468.7 L435.0 462.0 L428.0 465.0 L438.0 490.0 L438.0 510.0Z"/><path d="M445.2 468.7 L454.0 475.4 L467.3 479.8 L486.1 480.9 L498.3 473.2 L511.6 463.2 L519.4 451.0 L521.6 433.3 L521.0 428.9 L518.3 431.0 L507.2 441.0 L498.3 439.9 L489.5 448.8 L480.6 457.7 L467.3 461.0 L454.0 459.9 L447.4 457.7 L440.0 462.0Z"/><path d="M490.0 282.0 L516.0 285.0 L560.0 285.0 L591.0 305.0 L578.0 326.0 L550.0 312.0 L525.0 340.0 L511.0 329.0 L500.0 320.0Z"/><path d="M489.5 326.1 L476.3 331.8 L463.0 337.5 L444.0 340.4 L425.0 341.3 L406.0 341.3 L387.0 338.5 L373.7 332.8 L360.4 326.1 L350.0 319.5 L348.0 310.0 L349.0 299.0 L354.7 293.0 L368.0 281.7 L381.3 274.0 L396.5 268.4 L411.7 264.6 L425.0 262.3 L438.3 262.7 L451.6 264.6 L461.0 268.4 L469.6 272.2 L490.0 282.0 L512.0 292.0 L515.0 305.0 L500.0 320.0Z"/><path d="M441.0 261.7 L442.0 255.0 L447.8 248.4 L455.4 240.8 L466.8 235.0 L480.0 232.3 L495.2 232.7 L508.5 234.6 L513.3 236.0 L513.0 247.5 L513.3 266.5 L516.0 285.0 L505.0 290.0 L490.0 282.0 L469.6 272.2 L461.0 268.4 L451.6 264.6Z"/><path d="M513.3 236.1 L514.2 230.4 L524.7 224.7 L532.3 217.1 L543.7 215.6 L560.8 217.1 L572.2 221.8 L583.6 225.6 L595.0 232.3 L603.5 240.8 L606.4 249.4 L604.5 260.8 L598.8 268.4 L591.2 273.1 L560.0 285.0 L530.0 292.0 L518.0 290.0 L513.7 266.5 L512.3 249.4Z"/><path d="M598.8 268.4 L614.0 268.0 L636.8 267.4 L644.4 273.1 L657.7 277.9 L669.0 285.5 L676.6 294.0 L677.6 302.6 L675.7 309.2 L667.0 315.7 L659.5 316.8 L652.0 325.2 L646.2 320.4 L636.8 314.7 L621.6 311.5 L606.4 309.2 L591.2 305.4 L577.9 305.4 L545.0 300.0 L530.0 292.0 L560.0 285.0 L591.2 273.1Z"/><path d="M577.9 305.4 L591.2 305.4 L606.4 309.2 L621.6 311.5 L636.8 314.7 L646.2 320.4 L652.0 325.2 L663.3 338.5 L676.6 350.8 L677.6 367.0 L674.7 380.3 L669.0 391.7 L657.7 401.2 L646.2 406.9 L633.0 407.8 L622.5 406.9 L625.4 393.6 L625.4 380.3 L620.6 367.0 L614.0 355.6 L602.6 344.2 L591.2 332.8 L577.9 326.1 L550.0 310.0Z"/><path d="M509.5 329.0 L504.7 344.2 L500.0 361.3 L501.0 372.7 L506.6 389.8 L514.2 403.0 L521.8 412.6 L527.7 421.1 L524.9 422.2 L518.3 431.0 L507.2 441.0 L498.3 439.9 L489.5 448.8 L480.6 457.7 L467.3 461.0 L454.0 459.9 L447.4 457.7 L438.5 451.0 L429.7 442.1 L423.0 431.0 L421.9 420.0 L422.0 416.4 L423.0 397.4 L426.0 393.6 L424.0 386.0 L425.0 374.6 L432.6 361.3 L437.3 343.2 L444.0 340.4 L463.0 337.5 L476.3 331.8 L489.5 326.1 L500.0 320.0 L512.0 312.0Z"/><path d="M511.4 329.0 L505.7 344.2 L501.0 359.4 L502.0 374.6 L507.6 391.7 L517.0 406.9 L526.6 419.2 L539.9 431.0 L551.0 438.8 L562.0 443.3 L575.3 445.5 L588.6 442.1 L597.5 435.5 L608.5 428.9 L617.4 420.0 L622.5 406.9 L625.4 393.6 L625.4 380.3 L620.6 367.0 L614.0 355.6 L602.6 344.2 L591.2 332.8 L577.9 326.1 L550.0 310.0 L525.0 305.0 L515.0 312.0Z"/></clipPath></defs><rect x="331" y="208" width="361" height="345" fill="#020202"/><ellipse cx="395" cy="250" rx="50" ry="28" fill="#141410" filter="url(#bl)"/><ellipse cx="650" cy="440" rx="25" ry="40" fill="#10100c" filter="url(#bl)"/><path d="M437.3 343.2 L435.4 351.8 L430.7 365.0 L424.0 374.6 L423.0 383.1 L411.7 380.3 L396.5 375.5 L387.0 368.9 L392.7 365.0 L387.0 353.7 L387.0 339.4 L406.0 341.3 L425.0 341.3Z" fill="#2c1670" stroke="#2c1670" stroke-width="0.8"/><path d="M405.0 440.0 L425.0 444.0 L440.0 452.0 L450.0 460.0 L450.0 472.0 L440.0 492.0 L425.0 480.0 L400.0 475.0 L415.0 465.0Z" fill="#6a48cc" stroke="#6a48cc" stroke-width="0.8"/><path d="M385.4 426.6 L383.2 424.0 L384.0 408.8 L386.0 393.6 L390.8 384.0 L399.3 379.3 L411.7 380.3 L423.0 383.1 L424.0 386.0 L426.0 393.6 L423.0 397.4 L422.0 416.4 L423.0 431.0 L429.7 442.1 L432.0 450.0 L425.0 455.0 L415.0 450.0 L405.0 440.0 L391.0 430.0Z" fill="#8a68e0" stroke="#8a68e0" stroke-width="0.8"/><path d="M383.2 428.9 L369.9 434.4 L361.0 444.4 L357.7 457.7 L358.8 470.9 L367.7 482.0 L378.7 489.8 L386.5 484.2 L400.0 475.0 L415.0 465.0 L420.0 455.0 L405.0 440.0 L391.0 430.0 L385.4 426.6Z" fill="#8864e2" stroke="#8864e2" stroke-width="0.8"/><path d="M378.7 489.8 L377.6 502.0 L375.4 513.0 L378.7 526.3 L387.6 537.4 L400.9 545.1 L414.2 546.2 L425.2 539.6 L433.0 528.5 L438.0 510.0 L440.0 490.0 L435.0 470.0 L425.0 460.0 L415.0 465.0 L400.0 475.0 L386.5 484.2Z" fill="#8460e0" stroke="#8460e0" stroke-width="0.8"/><path d="M433.0 528.5 L440.7 537.4 L449.6 544.0 L462.9 545.8 L476.2 542.9 L487.3 533.0 L492.8 519.7 L493.9 506.4 L490.6 493.1 L486.1 483.1 L486.1 480.9 L467.3 479.8 L454.0 475.4 L445.2 468.7 L435.0 462.0 L428.0 465.0 L438.0 490.0 L438.0 510.0Z" fill="#7a54d6" stroke="#7a54d6" stroke-width="0.8"/><path d="M445.2 468.7 L454.0 475.4 L467.3 479.8 L486.1 480.9 L498.3 473.2 L511.6 463.2 L519.4 451.0 L521.6 433.3 L521.0 428.9 L518.3 431.0 L507.2 441.0 L498.3 439.9 L489.5 448.8 L480.6 457.7 L467.3 461.0 L454.0 459.9 L447.4 457.7 L440.0 462.0Z" fill="#8c66e4" stroke="#8c66e4" stroke-width="0.8"/><path d="M490.0 282.0 L516.0 285.0 L560.0 285.0 L591.0 305.0 L578.0 326.0 L550.0 312.0 L525.0 340.0 L511.0 329.0 L500.0 320.0Z" fill="#6a44c8" stroke="#6a44c8" stroke-width="0.8"/><path d="M489.5 326.1 L476.3 331.8 L463.0 337.5 L444.0 340.4 L425.0 341.3 L406.0 341.3 L387.0 338.5 L373.7 332.8 L360.4 326.1 L350.0 319.5 L348.0 310.0 L349.0 299.0 L354.7 293.0 L368.0 281.7 L381.3 274.0 L396.5 268.4 L411.7 264.6 L425.0 262.3 L438.3 262.7 L451.6 264.6 L461.0 268.4 L469.6 272.2 L490.0 282.0 L512.0 292.0 L515.0 305.0 L500.0 320.0Z" fill="#8359de" stroke="#8359de" stroke-width="0.8"/><path d="M441.0 261.7 L442.0 255.0 L447.8 248.4 L455.4 240.8 L466.8 235.0 L480.0 232.3 L495.2 232.7 L508.5 234.6 L513.3 236.0 L513.0 247.5 L513.3 266.5 L516.0 285.0 L505.0 290.0 L490.0 282.0 L469.6 272.2 L461.0 268.4 L451.6 264.6Z" fill="#8359de" stroke="#8359de" stroke-width="0.8"/><path d="M513.3 236.1 L514.2 230.4 L524.7 224.7 L532.3 217.1 L543.7 215.6 L560.8 217.1 L572.2 221.8 L583.6 225.6 L595.0 232.3 L603.5 240.8 L606.4 249.4 L604.5 260.8 L598.8 268.4 L591.2 273.1 L560.0 285.0 L530.0 292.0 L518.0 290.0 L513.7 266.5 L512.3 249.4Z" fill="#8359de" stroke="#8359de" stroke-width="0.8"/><path d="M598.8 268.4 L614.0 268.0 L636.8 267.4 L644.4 273.1 L657.7 277.9 L669.0 285.5 L676.6 294.0 L677.6 302.6 L675.7 309.2 L667.0 315.7 L659.5 316.8 L652.0 325.2 L646.2 320.4 L636.8 314.7 L621.6 311.5 L606.4 309.2 L591.2 305.4 L577.9 305.4 L545.0 300.0 L530.0 292.0 L560.0 285.0 L591.2 273.1Z" fill="#8359de" stroke="#8359de" stroke-width="0.8"/><path d="M577.9 305.4 L591.2 305.4 L606.4 309.2 L621.6 311.5 L636.8 314.7 L646.2 320.4 L652.0 325.2 L663.3 338.5 L676.6 350.8 L677.6 367.0 L674.7 380.3 L669.0 391.7 L657.7 401.2 L646.2 406.9 L633.0 407.8 L622.5 406.9 L625.4 393.6 L625.4 380.3 L620.6 367.0 L614.0 355.6 L602.6 344.2 L591.2 332.8 L577.9 326.1 L550.0 310.0Z" fill="#8359de" stroke="#8359de" stroke-width="0.8"/><path d="M509.5 329.0 L504.7 344.2 L500.0 361.3 L501.0 372.7 L506.6 389.8 L514.2 403.0 L521.8 412.6 L527.7 421.1 L524.9 422.2 L518.3 431.0 L507.2 441.0 L498.3 439.9 L489.5 448.8 L480.6 457.7 L467.3 461.0 L454.0 459.9 L447.4 457.7 L438.5 451.0 L429.7 442.1 L423.0 431.0 L421.9 420.0 L422.0 416.4 L423.0 397.4 L426.0 393.6 L424.0 386.0 L425.0 374.6 L432.6 361.3 L437.3 343.2 L444.0 340.4 L463.0 337.5 L476.3 331.8 L489.5 326.1 L500.0 320.0 L512.0 312.0Z" fill="#8359de" stroke="#8359de" stroke-width="0.8"/><path d="M511.4 329.0 L505.7 344.2 L501.0 359.4 L502.0 374.6 L507.6 391.7 L517.0 406.9 L526.6 419.2 L539.9 431.0 L551.0 438.8 L562.0 443.3 L575.3 445.5 L588.6 442.1 L597.5 435.5 L608.5 428.9 L617.4 420.0 L622.5 406.9 L625.4 393.6 L625.4 380.3 L620.6 367.0 L614.0 355.6 L602.6 344.2 L591.2 332.8 L577.9 326.1 L550.0 310.0 L525.0 305.0 L515.0 312.0Z" fill="#8359de" stroke="#8359de" stroke-width="0.8"/><g clip-path="url(#fl)"><ellipse cx="405" cy="300" rx="40" ry="20" fill="#9270ea" filter="url(#bl)" opacity="0.8"/><ellipse cx="568" cy="390" rx="30" ry="36" fill="#9372ec" filter="url(#bl)" opacity="0.8"/><ellipse cx="468" cy="400" rx="24" ry="40" fill="#8f6ce8" filter="url(#bl)" opacity="0.8"/><ellipse cx="560" cy="243" rx="26" ry="15" fill="#8d6ae6" filter="url(#bl)" opacity="0.8"/><ellipse cx="655" cy="365" rx="14" ry="28" fill="#9270ea" filter="url(#bl)" opacity="0.8"/><ellipse cx="645" cy="292" rx="22" ry="10" fill="#8a66e4" filter="url(#bl)" opacity="0.8"/><ellipse cx="478" cy="249" rx="20" ry="10" fill="#8c68e4" filter="url(#bl)" opacity="0.8"/><ellipse cx="400" cy="455" rx="18" ry="14" fill="#9270ea" filter="url(#bl)" opacity="0.8"/><ellipse cx="405" cy="520" rx="16" ry="16" fill="#8c68e6" filter="url(#bl)" opacity="0.8"/><ellipse cx="521" cy="298" rx="30" ry="24" fill="#5a38b8" filter="url(#bs)" opacity="0.75"/><ellipse cx="592" cy="277" rx="28" ry="4.5" fill="#40249a" filter="url(#bs)" opacity="0.8"/><ellipse cx="622" cy="303" rx="18" ry="3.5" fill="#40249a" filter="url(#bs)" opacity="0.8"/><ellipse cx="545" cy="318" rx="14" ry="8" fill="#4a2aa6" filter="url(#bs)" opacity="0.7"/><ellipse cx="634" cy="378" rx="7" ry="30" fill="#4a2ca8" filter="url(#bs)" opacity="0.8"/><ellipse cx="466" cy="349" rx="32" ry="10" fill="#24106a" filter="url(#bs)" opacity="0.95"/><ellipse cx="530" cy="345" rx="12" ry="14" fill="#5a38b8" filter="url(#bs)" opacity="0.6"/><ellipse cx="458" cy="505" rx="16" ry="26" fill="#4424a0" filter="url(#bs)" opacity="0.75"/><ellipse cx="427" cy="462" rx="18" ry="14" fill="#5030b0" filter="url(#bs)" opacity="0.6"/><ellipse cx="480" cy="470" rx="25" ry="6" fill="#5a38b8" filter="url(#bs)" opacity="0.5"/></g><path d="M437.3 343.2 L435.4 351.8 L430.7 365.0 L424.0 374.6 L423.0 383.1 L411.7 380.3 L396.5 375.5 L387.0 368.9 L392.7 365.0 L387.0 353.7 L387.0 339.4" fill="none" stroke="#0a149c" stroke-width="2.2" stroke-linejoin="round"/><path d="M385.4 426.6 L383.2 424.0 L384.0 408.8 L386.0 393.6 L390.8 384.0 L399.3 379.3 L411.7 380.3 L423.0 383.1 L424.0 386.0 L426.0 393.6 L423.0 397.4 L422.0 416.4 L423.0 431.0 L429.7 442.1" fill="none" stroke="#0a149c" stroke-width="2.2" stroke-linejoin="round"/><path d="M383.2 428.9 L369.9 434.4 L361.0 444.4 L357.7 457.7 L358.8 470.9 L367.7 482.0 L378.7 489.8 L386.5 484.2" fill="none" stroke="#0a149c" stroke-width="2.2" stroke-linejoin="round"/><path d="M378.7 489.8 L377.6 502.0 L375.4 513.0 L378.7 526.3 L387.6 537.4 L400.9 545.1 L414.2 546.2 L425.2 539.6 L433.0 528.5" fill="none" stroke="#0a149c" stroke-width="2.2" stroke-linejoin="round"/><path d="M433.0 528.5 L440.7 537.4 L449.6 544.0 L462.9 545.8 L476.2 542.9 L487.3 533.0 L492.8 519.7 L493.9 506.4 L490.6 493.1 L486.1 483.1 L486.1 480.9" fill="none" stroke="#0a149c" stroke-width="2.2" stroke-linejoin="round"/><path d="M445.2 468.7 L454.0 475.4 L467.3 479.8 L486.1 480.9 L498.3 473.2 L511.6 463.2 L519.4 451.0 L521.6 433.3 L521.0 428.9" fill="none" stroke="#0a149c" stroke-width="2.2" stroke-linejoin="round"/><path d="M489.5 326.1 L476.3 331.8 L463.0 337.5 L444.0 340.4 L425.0 341.3 L406.0 341.3 L387.0 338.5 L373.7 332.8 L360.4 326.1 L350.0 319.5 L348.0 310.0 L349.0 299.0 L354.7 293.0 L368.0 281.7 L381.3 274.0 L396.5 268.4 L411.7 264.6 L425.0 262.3 L438.3 262.7 L451.6 264.6 L461.0 268.4 L469.6 272.2" fill="none" stroke="#0a149c" stroke-width="2.2" stroke-linejoin="round"/><path d="M441.0 261.7 L442.0 255.0 L447.8 248.4 L455.4 240.8 L466.8 235.0 L480.0 232.3 L495.2 232.7 L508.5 234.6 L513.3 236.0 L513.0 247.5 L513.3 266.5" fill="none" stroke="#0a149c" stroke-width="2.2" stroke-linejoin="round"/><path d="M513.3 236.1 L514.2 230.4 L524.7 224.7 L532.3 217.1 L543.7 215.6 L560.8 217.1 L572.2 221.8 L583.6 225.6 L595.0 232.3 L603.5 240.8 L606.4 249.4 L604.5 260.8 L598.8 268.4 L591.2 273.1" fill="none" stroke="#0a149c" stroke-width="2.2" stroke-linejoin="round"/><path d="M598.8 268.4 L614.0 268.0 L636.8 267.4 L644.4 273.1 L657.7 277.9 L669.0 285.5 L676.6 294.0 L677.6 302.6 L675.7 309.2 L667.0 315.7 L659.5 316.8 L652.0 325.2 L646.2 320.4 L636.8 314.7 L621.6 311.5 L606.4 309.2 L591.2 305.4 L577.9 305.4" fill="none" stroke="#0a149c" stroke-width="2.2" stroke-linejoin="round"/><path d="M577.9 305.4 L591.2 305.4 L606.4 309.2 L621.6 311.5 L636.8 314.7 L646.2 320.4 L652.0 325.2 L663.3 338.5 L676.6 350.8 L677.6 367.0 L674.7 380.3 L669.0 391.7 L657.7 401.2 L646.2 406.9 L633.0 407.8 L622.5 406.9 L625.4 393.6 L625.4 380.3 L620.6 367.0 L614.0 355.6 L602.6 344.2 L591.2 332.8 L577.9 326.1" fill="none" stroke="#0a149c" stroke-width="2.2" stroke-linejoin="round"/><path d="M509.5 329.0 L504.7 344.2 L500.0 361.3 L501.0 372.7 L506.6 389.8 L514.2 403.0 L521.8 412.6 L527.7 421.1 L524.9 422.2 L518.3 431.0 L507.2 441.0 L498.3 439.9 L489.5 448.8 L480.6 457.7 L467.3 461.0 L454.0 459.9 L447.4 457.7 L438.5 451.0 L429.7 442.1 L423.0 431.0 L421.9 420.0 L422.0 416.4 L423.0 397.4 L426.0 393.6 L424.0 386.0 L425.0 374.6 L432.6 361.3 L437.3 343.2" fill="none" stroke="#0a149c" stroke-width="2.2" stroke-linejoin="round"/><path d="M511.4 329.0 L505.7 344.2 L501.0 359.4 L502.0 374.6 L507.6 391.7 L517.0 406.9 L526.6 419.2 L539.9 431.0 L551.0 438.8 L562.0 443.3 L575.3 445.5 L588.6 442.1 L597.5 435.5 L608.5 428.9 L617.4 420.0 L622.5 406.9 L625.4 393.6 L625.4 380.3 L620.6 367.0 L614.0 355.6 L602.6 344.2 L591.2 332.8 L577.9 326.1" fill="none" stroke="#0a149c" stroke-width="2.2" stroke-linejoin="round"/><path d="M437.3 343.2 L435.4 351.8 L430.7 365.0 L424.0 374.6 L423.0 383.1 L411.7 380.3 L396.5 375.5 L387.0 368.9 L392.7 365.0 L387.0 353.7 L387.0 339.4" fill="none" stroke="#ffffff" stroke-width="0.6" stroke-dasharray="1.6 2.4" stroke-linejoin="round" opacity="0.7"/><path d="M385.4 426.6 L383.2 424.0 L384.0 408.8 L386.0 393.6 L390.8 384.0 L399.3 379.3 L411.7 380.3 L423.0 383.1 L424.0 386.0 L426.0 393.6 L423.0 397.4 L422.0 416.4 L423.0 431.0 L429.7 442.1" fill="none" stroke="#ffffff" stroke-width="0.6" stroke-dasharray="1.6 2.4" stroke-linejoin="round" opacity="0.7"/><path d="M383.2 428.9 L369.9 434.4 L361.0 444.4 L357.7 457.7 L358.8 470.9 L367.7 482.0 L378.7 489.8 L386.5 484.2" fill="none" stroke="#ffffff" stroke-width="0.6" stroke-dasharray="1.6 2.4" stroke-linejoin="round" opacity="0.7"/><path d="M378.7 489.8 L377.6 502.0 L375.4 513.0 L378.7 526.3 L387.6 537.4 L400.9 545.1 L414.2 546.2 L425.2 539.6 L433.0 528.5" fill="none" stroke="#ffffff" stroke-width="0.6" stroke-dasharray="1.6 2.4" stroke-linejoin="round" opacity="0.7"/><path d="M433.0 528.5 L440.7 537.4 L449.6 544.0 L462.9 545.8 L476.2 542.9 L487.3 533.0 L492.8 519.7 L493.9 506.4 L490.6 493.1 L486.1 483.1 L486.1 480.9" fill="none" stroke="#ffffff" stroke-width="0.6" stroke-dasharray="1.6 2.4" stroke-linejoin="round" opacity="0.7"/><path d="M445.2 468.7 L454.0 475.4 L467.3 479.8 L486.1 480.9 L498.3 473.2 L511.6 463.2 L519.4 451.0 L521.6 433.3 L521.0 428.9" fill="none" stroke="#ffffff" stroke-width="0.6" stroke-dasharray="1.6 2.4" stroke-linejoin="round" opacity="0.7"/><path d="M489.5 326.1 L476.3 331.8 L463.0 337.5 L444.0 340.4 L425.0 341.3 L406.0 341.3 L387.0 338.5 L373.7 332.8 L360.4 326.1 L350.0 319.5 L348.0 310.0 L349.0 299.0 L354.7 293.0 L368.0 281.7 L381.3 274.0 L396.5 268.4 L411.7 264.6 L425.0 262.3 L438.3 262.7 L451.6 264.6 L461.0 268.4 L469.6 272.2" fill="none" stroke="#ffffff" stroke-width="0.6" stroke-dasharray="1.6 2.4" stroke-linejoin="round" opacity="0.7"/><path d="M441.0 261.7 L442.0 255.0 L447.8 248.4 L455.4 240.8 L466.8 235.0 L480.0 232.3 L495.2 232.7 L508.5 234.6 L513.3 236.0 L513.0 247.5 L513.3 266.5" fill="none" stroke="#ffffff" stroke-width="0.6" stroke-dasharray="1.6 2.4" stroke-linejoin="round" opacity="0.7"/><path d="M513.3 236.1 L514.2 230.4 L524.7 224.7 L532.3 217.1 L543.7 215.6 L560.8 217.1 L572.2 221.8 L583.6 225.6 L595.0 232.3 L603.5 240.8 L606.4 249.4 L604.5 260.8 L598.8 268.4 L591.2 273.1" fill="none" stroke="#ffffff" stroke-width="0.6" stroke-dasharray="1.6 2.4" stroke-linejoin="round" opacity="0.7"/><path d="M598.8 268.4 L614.0 268.0 L636.8 267.4 L644.4 273.1 L657.7 277.9 L669.0 285.5 L676.6 294.0 L677.6 302.6 L675.7 309.2 L667.0 315.7 L659.5 316.8 L652.0 325.2 L646.2 320.4 L636.8 314.7 L621.6 311.5 L606.4 309.2 L591.2 305.4 L577.9 305.4" fill="none" stroke="#ffffff" stroke-width="0.6" stroke-dasharray="1.6 2.4" stroke-linejoin="round" opacity="0.7"/><path d="M577.9 305.4 L591.2 305.4 L606.4 309.2 L621.6 311.5 L636.8 314.7 L646.2 320.4 L652.0 325.2 L663.3 338.5 L676.6 350.8 L677.6 367.0 L674.7 380.3 L669.0 391.7 L657.7 401.2 L646.2 406.9 L633.0 407.8 L622.5 406.9 L625.4 393.6 L625.4 380.3 L620.6 367.0 L614.0 355.6 L602.6 344.2 L591.2 332.8 L577.9 326.1" fill="none" stroke="#ffffff" stroke-width="0.6" stroke-dasharray="1.6 2.4" stroke-linejoin="round" opacity="0.7"/><path d="M509.5 329.0 L504.7 344.2 L500.0 361.3 L501.0 372.7 L506.6 389.8 L514.2 403.0 L521.8 412.6 L527.7 421.1 L524.9 422.2 L518.3 431.0 L507.2 441.0 L498.3 439.9 L489.5 448.8 L480.6 457.7 L467.3 461.0 L454.0 459.9 L447.4 457.7 L438.5 451.0 L429.7 442.1 L423.0 431.0 L421.9 420.0 L422.0 416.4 L423.0 397.4 L426.0 393.6 L424.0 386.0 L425.0 374.6 L432.6 361.3 L437.3 343.2" fill="none" stroke="#ffffff" stroke-width="0.6" stroke-dasharray="1.6 2.4" stroke-linejoin="round" opacity="0.7"/><path d="M511.4 329.0 L505.7 344.2 L501.0 359.4 L502.0 374.6 L507.6 391.7 L517.0 406.9 L526.6 419.2 L539.9 431.0 L551.0 438.8 L562.0 443.3 L575.3 445.5 L588.6 442.1 L597.5 435.5 L608.5 428.9 L617.4 420.0 L622.5 406.9 L625.4 393.6 L625.4 380.3 L620.6 367.0 L614.0 355.6 L602.6 344.2 L591.2 332.8 L577.9 326.1" fill="none" stroke="#ffffff" stroke-width="0.6" stroke-dasharray="1.6 2.4" stroke-linejoin="round" opacity="0.7"/><g stroke="#e2d2ea" stroke-width="1.5" stroke-linecap="round" opacity="0.75"><line x1="523" y1="294" x2="479.5" y2="251"/><line x1="523" y1="294" x2="505.9" y2="249.8"/><line x1="523" y1="294" x2="526.6" y2="247.2"/><line x1="523" y1="294" x2="554.8" y2="239.7"/><line x1="523" y1="294" x2="502" y2="260.4"/><line x1="523" y1="294" x2="534" y2="260.4"/><line x1="523" y1="294" x2="556.7" y2="263.4"/><line x1="523" y1="294" x2="577.4" y2="269.8"/><line x1="523" y1="294" x2="588.7" y2="279.2"/><line x1="523" y1="294" x2="473.8" y2="274.7"/><line x1="523" y1="294" x2="492.7" y2="282.2"/><line x1="523" y1="294" x2="554.8" y2="279.2"/><line x1="523" y1="294" x2="569.9" y2="283"/><line x1="523" y1="294" x2="458.8" y2="283"/><line x1="523" y1="294" x2="456.9" y2="290.5"/><line x1="523" y1="294" x2="475.7" y2="290.5"/><line x1="523" y1="294" x2="477.6" y2="310.1"/><line x1="523" y1="294" x2="492.7" y2="312.4"/><line x1="523" y1="294" x2="494.6" y2="320.7"/><line x1="523" y1="294" x2="507.7" y2="322.5"/><line x1="523" y1="294" x2="530.3" y2="316.9"/><line x1="523" y1="294" x2="519" y2="339.5"/><line x1="523" y1="294" x2="487" y2="346.3"/><line x1="523" y1="294" x2="554.8" y2="301.8"/><line x1="523" y1="294" x2="571.8" y2="303.7"/><line x1="523" y1="294" x2="569.9" y2="326.3"/><line x1="523" y1="294" x2="551" y2="305.6"/></g><ellipse cx="479.5" cy="251" rx="3.1" ry="3.9" fill="#d8aab8"/><ellipse cx="505.9" cy="249.8" rx="3.1" ry="3.9" fill="#d8aab8"/><ellipse cx="526.6" cy="247.2" rx="3.1" ry="3.9" fill="#d8aab8"/><ellipse cx="554.8" cy="239.7" rx="3.1" ry="3.9" fill="#d8aab8"/><ellipse cx="502" cy="260.4" rx="3.1" ry="3.9" fill="#d8aab8"/><ellipse cx="534" cy="260.4" rx="3.1" ry="3.9" fill="#d8aab8"/><ellipse cx="556.7" cy="263.4" rx="3.1" ry="3.9" fill="#d8aab8"/><ellipse cx="577.4" cy="269.8" rx="3.1" ry="3.9" fill="#d8aab8"/><ellipse cx="588.7" cy="279.2" rx="3.1" ry="3.9" fill="#d8aab8"/><ellipse cx="473.8" cy="274.7" rx="3.1" ry="3.9" fill="#d8aab8"/><ellipse cx="492.7" cy="282.2" rx="3.1" ry="3.9" fill="#d8aab8"/><ellipse cx="554.8" cy="279.2" rx="3.1" ry="3.9" fill="#d8aab8"/><ellipse cx="569.9" cy="283" rx="3.1" ry="3.9" fill="#d8aab8"/><ellipse cx="458.8" cy="283" rx="3.1" ry="3.9" fill="#d8aab8"/><ellipse cx="456.9" cy="290.5" rx="3.1" ry="3.9" fill="#d8aab8"/><ellipse cx="475.7" cy="290.5" rx="3.1" ry="3.9" fill="#d8aab8"/><ellipse cx="477.6" cy="310.1" rx="3.1" ry="3.9" fill="#d8aab8"/><ellipse cx="492.7" cy="312.4" rx="3.1" ry="3.9" fill="#d8aab8"/><ellipse cx="494.6" cy="320.7" rx="3.1" ry="3.9" fill="#d8aab8"/><ellipse cx="507.7" cy="322.5" rx="3.1" ry="3.9" fill="#d8aab8"/><ellipse cx="530.3" cy="316.9" rx="3.1" ry="3.9" fill="#d8aab8"/><ellipse cx="519" cy="339.5" rx="3.1" ry="3.9" fill="#d8aab8"/><ellipse cx="487" cy="346.3" rx="3.1" ry="3.9" fill="#d8aab8"/><ellipse cx="554.8" cy="301.8" rx="3.1" ry="3.9" fill="#d8aab8"/><ellipse cx="571.8" cy="303.7" rx="3.1" ry="3.9" fill="#d8aab8"/><ellipse cx="569.9" cy="326.3" rx="3.1" ry="3.9" fill="#d8aab8"/><ellipse cx="551" cy="305.6" rx="3.1" ry="3.9" fill="#d8aab8"/><ellipse cx="523" cy="294" rx="15" ry="17.5" fill="#9fb030" filter="url(#b2)"/><ellipse cx="522" cy="291" rx="8" ry="9" fill="#bccb4a" filter="url(#b2)"/><g fill="#dde07a"><circle cx="518" cy="285" r="1.2"/><circle cx="526" cy="284" r="1.2"/><circle cx="521" cy="292" r="1.2"/><circle cx="529" cy="291" r="1.2"/><circle cx="516" cy="297" r="1.2"/><circle cx="525" cy="299" r="1.2"/></g><g stroke="#cdb4d8" stroke-width="1" opacity="0.85"><line x1="426" y1="456" x2="395" y2="446"/><line x1="426" y1="456" x2="410" y2="437"/><line x1="426" y1="456" x2="420" y2="432"/><line x1="426" y1="456" x2="388" y2="461"/><line x1="426" y1="456" x2="389" y2="478"/><line x1="426" y1="456" x2="406" y2="478"/><line x1="426" y1="456" x2="414" y2="483"/><line x1="426" y1="456" x2="405" y2="491"/><line x1="426" y1="456" x2="420" y2="484"/><line x1="426" y1="456" x2="430" y2="490"/><line x1="426" y1="456" x2="414" y2="501"/><line x1="426" y1="456" x2="434" y2="502"/><line x1="426" y1="456" x2="448" y2="490"/><line x1="426" y1="456" x2="452" y2="466"/><line x1="426" y1="456" x2="464" y2="472"/><line x1="426" y1="456" x2="437" y2="478"/><line x1="426" y1="456" x2="428" y2="476"/></g><ellipse cx="395" cy="446" rx="2.3" ry="3" fill="#e2c0cc"/><ellipse cx="410" cy="437" rx="2.3" ry="3" fill="#e2c0cc"/><ellipse cx="420" cy="432" rx="2.3" ry="3" fill="#e2c0cc"/><ellipse cx="388" cy="461" rx="2.3" ry="3" fill="#e2c0cc"/><ellipse cx="389" cy="478" rx="2.3" ry="3" fill="#e2c0cc"/><ellipse cx="406" cy="478" rx="2.3" ry="3" fill="#e2c0cc"/><ellipse cx="414" cy="483" rx="2.3" ry="3" fill="#e2c0cc"/><ellipse cx="405" cy="491" rx="2.3" ry="3" fill="#e2c0cc"/><ellipse cx="420" cy="484" rx="2.3" ry="3" fill="#e2c0cc"/><ellipse cx="430" cy="490" rx="2.3" ry="3" fill="#e2c0cc"/><ellipse cx="414" cy="501" rx="2.3" ry="3" fill="#e2c0cc"/><ellipse cx="434" cy="502" rx="2.3" ry="3" fill="#e2c0cc"/><ellipse cx="448" cy="490" rx="2.3" ry="3" fill="#e2c0cc"/><ellipse cx="452" cy="466" rx="2.3" ry="3" fill="#e2c0cc"/><ellipse cx="464" cy="472" rx="2.3" ry="3" fill="#e2c0cc"/><ellipse cx="437" cy="478" rx="2.3" ry="3" fill="#e2c0cc"/><ellipse cx="428" cy="476" rx="2.3" ry="3" fill="#e2c0cc"/><ellipse cx="426" cy="455.5" rx="10.500" ry="10.500" fill="#93ac2c" filter="url(#b2)"/><ellipse cx="425" cy="453" rx="5.500" ry="5.500" fill="#b4c844" filter="url(#b2)"/><ellipse cx="404" cy="352" rx="2.3" ry="2.6" fill="#d8b8c4" filter="url(#b1)"/><ellipse cx="411" cy="364" rx="2.3" ry="2.6" fill="#d8b8c4" filter="url(#b1)"/><ellipse cx="398" cy="367" rx="2.3" ry="2.6" fill="#d8b8c4" filter="url(#b1)"/><ellipse cx="420" cy="356" rx="2.3" ry="2.6" fill="#d8b8c4" filter="url(#b1)"/><ellipse cx="431" cy="348" rx="2.3" ry="2.6" fill="#d8b8c4" filter="url(#b1)"/><ellipse cx="627" cy="462" rx="2" ry="4" fill="#8a8070" transform="rotate(-20 627 462)"/><ellipse cx="623" cy="550" rx="2" ry="3" fill="#6a6050"/><ellipse cx="631" cy="550" rx="2" ry="3" fill="#6a6050"/></svg>
<div id="menu" class="a" style="left:101px;top:67px;width:220px;height:413px;background:linear-gradient(90deg,#cdc8cd 0px,#e4e1e4 25px,#fff 70px);box-sizing:border-box;border:1px solid #fff;border-bottom:1px solid #c4c4c4;box-shadow:-1px 0 0 #9a9a9a">
<span class="mi" style="top:3px;">Modalità</span>
<div class="arr" style="top:5px"></div>
<div class="sep" style="top:23px"></div>
<span class="mi" style="top:30px;">Simmetria verticale</span>
<span class="mi" style="top:49px;">Simmetria orizzontale</span>
<span class="mi" style="top:68px;">Ruota</span>
<div class="arr" style="top:70px"></div>
<span class="mi" style="top:87px;">Inclina...</span>
<span class="mi" style="top:106px;">Offset...</span>
<div class="sep" style="top:126px"></div>
<span class="mi" style="top:133px;">Dimensione immagine...</span>
<span class="sc" style="top:133px;">Ctrl+H</span>
<span class="mi" style="top:152px;">Dimensioni zona lavoro...</span>
<span class="sc" style="top:152px;">Shift+H</span>
<span class="mi" style="top:171px;">Adatta immagine...</span>
<div class="a" style="left:0;top:187px;width:217px;height:19px;box-sizing:border-box;border:1px solid #3a6ec8;background:linear-gradient(90deg,#5a86d2,#a2bce8)"></div>
<span class="mi" style="top:190px;color:#fff;">Duplica</span>
<span class="sc" style="top:190px;color:#fff;">Ctrl+U</span>
<div class="sep" style="top:210px"></div>
<span class="mi" style="top:217px;color:#aaa;">Taglierina</span>
<span class="sc" style="top:217px;color:#aaa;">Shift+Ctrl+H</span>
<span class="mi" style="top:236px;">Taglierina automatica</span>
<span class="mi" style="top:255px;">Contorno esterno...</span>
<span class="mi" style="top:274px;">Ombra esterna...</span>
<div class="sep" style="top:294px"></div>
<span class="mi" style="top:301px;">Colore di trasparenza...</span>
<span class="mi" style="top:320px;color:#aaa;">Transparenza automatica</span>
<div class="arr" style="top:322px"></div>
<span class="mi" style="top:339px;">Maschera di trasparenza...</span>
<div class="sep" style="top:359px"></div>
<span class="mi" style="top:366px;">Testo...</span>
<span class="sc" style="top:366px;">Ctrl+T</span>
<div class="sep" style="top:386px"></div>
<span class="mi" style="top:393px;">Plug-in</span>
<div class="arr" style="top:395px"></div>
</div>
<div class="a" style="left:55px;top:553px;font-family:'Liberation Serif',serif;font-weight:bold;font-size:56px;color:#ffcc00;line-height:64px;-webkit-text-stroke:1.8px #ffcc00">7</div>
</div></body></html>
